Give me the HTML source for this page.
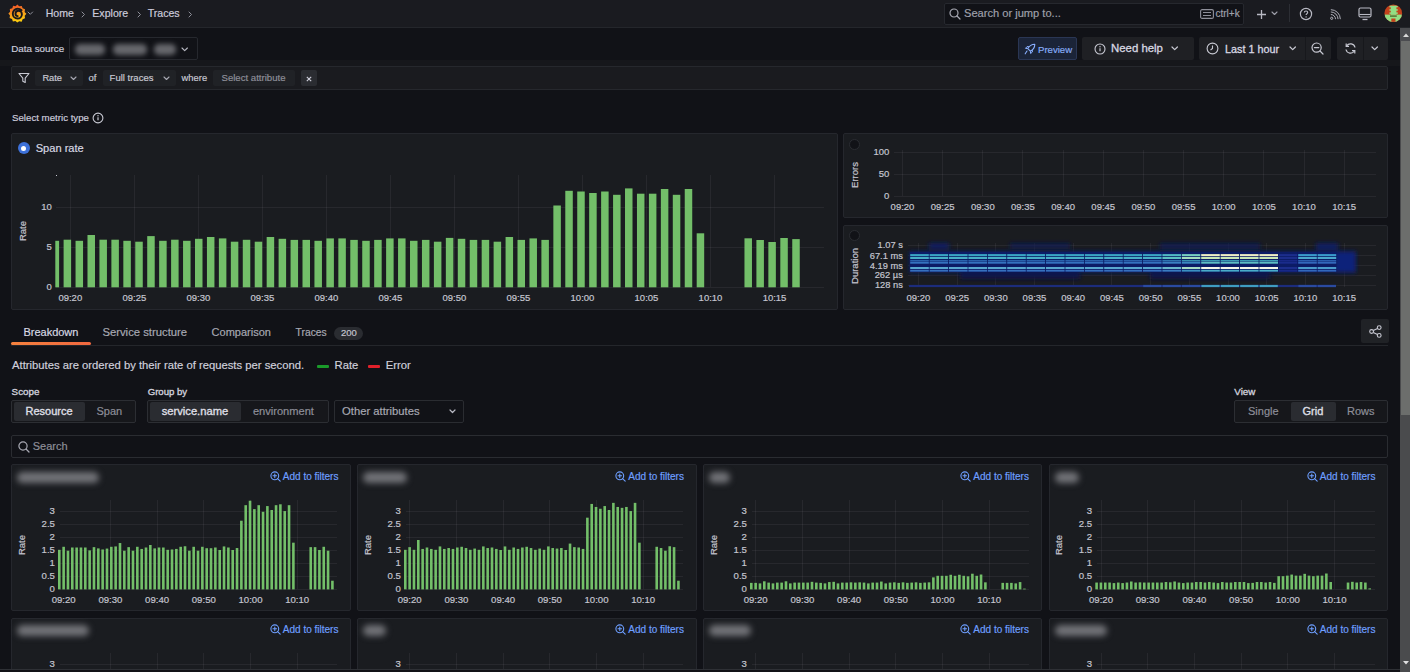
<!DOCTYPE html><html><head><meta charset="utf-8"><style>
html,body{margin:0;padding:0;}
body{width:1410px;height:672px;overflow:hidden;background:#111217;position:relative;font-family:"Liberation Sans", sans-serif;}
.a{position:absolute;}
.t{position:absolute;white-space:nowrap;-webkit-text-stroke-width:0.18px;}
svg{overflow:visible;}
</style></head><body>
<div class="a" style="left:0px;top:0px;width:1410px;height:27px;background:#1a1b20;"></div>
<div class="a" style="left:0px;top:27px;width:1410px;height:1px;background:#24262b;"></div>
<svg class="a" style="left:7.5px;top:4px" width="19" height="19" viewBox="0 0 19 19">
<defs><linearGradient id="lg" x1="0.3" y1="0" x2="0.5" y2="1"><stop offset="0" stop-color="#f2502a"/><stop offset="0.55" stop-color="#f7a21b"/><stop offset="1" stop-color="#fcd20c"/></linearGradient></defs>
<path d="M9.3 0.6 L11.2 2.3 L13.8 1.9 L14.6 4.3 L17 5.3 L16.6 7.9 L18.4 9.8 L16.7 11.7 L17 14.3 L14.6 15.2 L13.7 17.7 L11.2 17.2 L9.3 18.6 L7.4 17 L4.9 17.5 L4 15 L1.6 14.1 L2 11.6 L0.4 9.6 L2.1 7.7 L1.8 5.1 L4.3 4.2 L5.1 1.8 L7.6 2.3 Z" fill="url(#lg)"/>
<path d="M13.6 6.2 C12.6 5.3 11.2 4.8 9.6 4.8 C6.9 4.8 4.8 7 4.8 9.7 C4.8 12.4 6.9 14.5 9.6 14.5 C12 14.5 13.9 12.6 13.9 10.2 C13.9 8.2 12.3 6.8 10.5 6.8 C8.8 6.8 7.5 8.1 7.5 9.8 C7.5 11.1 8.5 12.1 9.7 12.1" fill="none" stroke="#17181c" stroke-width="1.9" stroke-linecap="round"/>
</svg>
<svg class="a" style="left:27.20px;top:11.25px" width="6.6" height="4.3"><path d="M1 1 L3.3 3.3 L5.6 1" fill="none" stroke="#8e8f99" stroke-width="1.0" stroke-linecap="round" stroke-linejoin="round"/></svg>
<div class="t" style="left:45.70px;top:8.03px;font-size:10.6px;line-height:10.6px;color:#ccccdc;font-weight:normal;">Home</div>
<svg class="a" style="left:81.05px;top:10.80px" width="4.5" height="7"><path d="M1 1 L3.5 3.5 L1 6" fill="none" stroke="#8e8f99" stroke-width="1.0" stroke-linecap="round" stroke-linejoin="round"/></svg>
<div class="t" style="left:92.30px;top:8.03px;font-size:10.6px;line-height:10.6px;color:#ccccdc;font-weight:normal;">Explore</div>
<svg class="a" style="left:137.05px;top:10.80px" width="4.5" height="7"><path d="M1 1 L3.5 3.5 L1 6" fill="none" stroke="#8e8f99" stroke-width="1.0" stroke-linecap="round" stroke-linejoin="round"/></svg>
<div class="t" style="left:147.70px;top:8.03px;font-size:10.6px;line-height:10.6px;color:#ccccdc;font-weight:normal;">Traces</div>
<svg class="a" style="left:188.05px;top:10.80px" width="4.5" height="7"><path d="M1 1 L3.5 3.5 L1 6" fill="none" stroke="#8e8f99" stroke-width="1.0" stroke-linecap="round" stroke-linejoin="round"/></svg>
<div class="a" style="left:944px;top:3px;width:300px;height:22px;background:#111217;border:1px solid #26282e;box-sizing:border-box;border-radius:2px;"></div>
<svg class="a" style="left:949px;top:8px" width="12" height="12" viewBox="0 0 12 12"><circle cx="5" cy="5" r="4" fill="none" stroke="#a8a9b3" stroke-width="1.2"/><path d="M8 8 L11 11" stroke="#a8a9b3" stroke-width="1.2" stroke-linecap="round"/></svg>
<div class="t" style="left:964.00px;top:8.10px;font-size:11.1px;line-height:11.1px;color:#9fa0ab;font-weight:normal;">Search or jump to...</div>
<svg class="a" style="left:1200px;top:9px" width="14" height="10" viewBox="0 0 14 10"><rect x="0.6" y="0.6" width="12.8" height="8.8" rx="1.5" fill="none" stroke="#8e8f99" stroke-width="1.1"/><path d="M3 3.5h8M3 6.5h8" stroke="#8e8f99" stroke-width="1"/></svg>
<div class="t" style="left:1215.50px;top:8.54px;font-size:10px;line-height:10px;color:#9fa0ab;font-weight:normal;">ctrl+k</div>
<svg class="a" style="left:1257px;top:10px" width="9" height="9"><path d="M4.5 0v9M0 4.5h9" stroke="#b8b9c3" stroke-width="1.3"/></svg>
<svg class="a" style="left:1270.50px;top:11.25px" width="7" height="4.5"><path d="M1 1 L3.5 3.5 L6 1" fill="none" stroke="#9fa0ab" stroke-width="1.1" stroke-linecap="round" stroke-linejoin="round"/></svg>
<div class="a" style="left:1289px;top:4px;width:1px;height:18px;background:#2c2e34;"></div>
<svg class="a" style="left:1299px;top:7px" width="14" height="14" viewBox="0 0 14 14"><circle cx="7" cy="7" r="5.6" fill="none" stroke="#b8b9c3" stroke-width="1.2"/><path d="M5.3 5.6c0-1 .8-1.6 1.7-1.6s1.7.6 1.7 1.5c0 1.2-1.6 1.2-1.6 2.4" fill="none" stroke="#b8b9c3" stroke-width="1.1"/><circle cx="7.1" cy="9.9" r=".7" fill="#b8b9c3"/></svg>
<svg class="a" style="left:1330px;top:9px" width="11" height="11" viewBox="0 0 13 13"><circle cx="2" cy="11" r="1.3" fill="none" stroke="#b8b9c3" stroke-width="1.1"/><path d="M1 6.5a5.5 5.5 0 0 1 5.5 5.5M1 3.5a8.5 8.5 0 0 1 8.5 8.5M1 0.8a11.2 11.2 0 0 1 11.2 11.2" fill="none" stroke="#b8b9c3" stroke-width="1.1"/></svg>
<svg class="a" style="left:1358px;top:7px" width="14" height="14" viewBox="0 0 14 14"><rect x="1" y="1" width="12" height="9" rx="1.5" fill="none" stroke="#b8b9c3" stroke-width="1.2"/><path d="M1.5 7.5h11" stroke="#b8b9c3" stroke-width="1.1"/><path d="M4.5 12.5h5" stroke="#b8b9c3" stroke-width="1.3"/></svg>
<svg class="a" style="left:1384.3px;top:4.3px" width="19" height="19" viewBox="0 0 19 19"><defs><clipPath id="av"><circle cx="9.3" cy="9.3" r="8.8"/></clipPath></defs>
<g clip-path="url(#av)"><rect x="0" y="0" width="19" height="19" fill="#c2421c"/>
<rect x="0" y="10.6" width="19" height="10" fill="#92de84"/>
<rect x="6.8" y="1.8" width="5.6" height="9" fill="#92de84"/>
<rect x="5.4" y="1.8" width="8.4" height="1.5" fill="#92de84"/>
<rect x="5.4" y="5.2" width="8.4" height="1.5" fill="#92de84"/><rect x="5.4" y="8.4" width="8.4" height="1.5" fill="#92de84"/>
<rect x="6" y="11.3" width="6.8" height="1.6" fill="#5a7a38"/>
<rect x="7.3" y="14.5" width="4.2" height="5" fill="#c2421c"/>
</g></svg>
<div class="t" style="left:11.30px;top:43.70px;font-size:9.8px;line-height:9.8px;color:#ccccdc;font-weight:normal;">Data source</div>
<div class="a" style="left:69px;top:37px;width:129px;height:23px;background:#111217;border:1px solid #26282e;box-sizing:border-box;border-radius:2px;"></div>
<div class="a" style="left:75.0px;top:43.5px;width:30.0px;height:11px;background:#66676c;border-radius:5px;filter:blur(2.8px);"></div>
<div class="a" style="left:113.0px;top:43.5px;width:33.5px;height:11px;background:#66676c;border-radius:5px;filter:blur(2.8px);"></div>
<div class="a" style="left:154.0px;top:43.5px;width:21.5px;height:11px;background:#66676c;border-radius:5px;filter:blur(2.8px);"></div>
<svg class="a" style="left:181.30px;top:46.95px" width="7.4" height="4.7"><path d="M1 1 L3.7 3.7 L6.4 1" fill="none" stroke="#b8b9c3" stroke-width="1.1" stroke-linecap="round" stroke-linejoin="round"/></svg>
<div class="a" style="left:1018px;top:37px;width:59px;height:23px;background:#1b2438;border:1px solid #2a3654;box-sizing:border-box;border-radius:2px;"></div>
<svg class="a" style="left:1023.5px;top:42.5px" width="12" height="12" viewBox="0 0 12 12"><path d="M10.8 1.2 C7.5 1.2 5.2 3 3.8 5.6 L6.4 8.2 C9 6.8 10.8 4.5 10.8 1.2 Z" fill="none" stroke="#8ab0ff" stroke-width="1.1" stroke-linejoin="round"/><path d="M3.8 5.6 L1.5 5.4 L3 3.6 L5.2 3.8 M6.4 8.2 L6.6 10.5 L8.4 9 L8.2 6.8" fill="none" stroke="#8ab0ff" stroke-width="1"/><path d="M3 8 L1.2 10.8" stroke="#8ab0ff" stroke-width="1.1" stroke-linecap="round"/></svg>
<div class="t" style="left:1038.00px;top:44.67px;font-size:9.6px;line-height:9.6px;color:#86acf6;font-weight:normal;">Preview</div>
<div class="a" style="left:1082px;top:37px;width:112px;height:23px;background:#1f2024;border-radius:2px;"></div>
<svg class="a" style="left:1094px;top:43px" width="12" height="12" viewBox="0 0 12 12"><circle cx="6" cy="6" r="5" fill="none" stroke="#c8c9d3" stroke-width="1.1"/><path d="M6 5.3v3" stroke="#c8c9d3" stroke-width="1.2"/><circle cx="6" cy="3.7" r=".7" fill="#c8c9d3"/></svg>
<div class="t" style="left:1111.00px;top:43.35px;font-size:11.4px;line-height:11.4px;color:#d8d8e2;font-weight:normal;-webkit-text-stroke:0.3px #d8d8e2;">Need help</div>
<svg class="a" style="left:1171.30px;top:46.45px" width="7.4" height="4.7"><path d="M1 1 L3.7 3.7 L6.4 1" fill="none" stroke="#c8c9d3" stroke-width="1.2" stroke-linecap="round" stroke-linejoin="round"/></svg>
<div class="a" style="left:1199px;top:37px;width:132px;height:23px;background:#1f2024;border-radius:2px;"></div>
<div class="a" style="left:1305px;top:37px;width:1px;height:23px;background:#17181c;"></div>
<svg class="a" style="left:1206px;top:42px" width="13" height="13" viewBox="0 0 13 13"><circle cx="6.5" cy="6.5" r="5.4" fill="none" stroke="#c8c9d3" stroke-width="1.1"/><path d="M6.5 3.5v3l-2 1.5" fill="none" stroke="#c8c9d3" stroke-width="1.1"/></svg>
<div class="t" style="left:1225.00px;top:43.86px;font-size:10.8px;line-height:10.8px;color:#d8d8e2;font-weight:normal;-webkit-text-stroke:0.3px #d8d8e2;">Last 1 hour</div>
<svg class="a" style="left:1289.30px;top:46.45px" width="7.4" height="4.7"><path d="M1 1 L3.7 3.7 L6.4 1" fill="none" stroke="#c8c9d3" stroke-width="1.2" stroke-linecap="round" stroke-linejoin="round"/></svg>
<svg class="a" style="left:1311px;top:42px" width="13" height="13" viewBox="0 0 13 13"><circle cx="5.6" cy="5.6" r="4.6" fill="none" stroke="#c8c9d3" stroke-width="1.2"/><path d="M3.4 5.6h4.4M9 9l3 3" stroke="#c8c9d3" stroke-width="1.2" stroke-linecap="round"/></svg>
<div class="a" style="left:1337px;top:37px;width:51px;height:23px;background:#1f2024;border-radius:2px;"></div>
<div class="a" style="left:1363px;top:37px;width:1px;height:23px;background:#17181c;"></div>
<svg class="a" style="left:1344px;top:42px" width="13" height="13" viewBox="0 0 13 13"><path d="M11 5.5A4.6 4.6 0 0 0 2.6 4M2 7.5A4.6 4.6 0 0 0 10.4 9" fill="none" stroke="#c8c9d3" stroke-width="1.2"/><path d="M2.2 1.5v2.8h2.8M10.8 11.5V8.7H8" fill="none" stroke="#c8c9d3" stroke-width="1.2"/></svg>
<svg class="a" style="left:1371.30px;top:46.45px" width="7.4" height="4.7"><path d="M1 1 L3.7 3.7 L6.4 1" fill="none" stroke="#c8c9d3" stroke-width="1.2" stroke-linecap="round" stroke-linejoin="round"/></svg>
<div class="a" style="left:0px;top:60px;width:1399.5px;height:6px;background:#16171b;"></div>
<div class="a" style="left:11px;top:66px;width:1377px;height:24px;background:#1a1b1f;border:1px solid #26282d;box-sizing:border-box;border-radius:2px;"></div>
<svg class="a" style="left:18px;top:72px" width="12" height="12" viewBox="0 0 12 12"><path d="M1 1.5h10L7.2 6.2v4.3L4.8 9.3V6.2Z" fill="none" stroke="#c8c9d3" stroke-width="1.1" stroke-linejoin="round"/></svg>
<div class="a" style="left:35px;top:70px;width:48px;height:16px;background:#202226;border-radius:2px;"></div>
<div class="t" style="left:42.40px;top:73.93px;font-size:9.3px;line-height:9.3px;color:#c8c9d3;font-weight:normal;">Rate</div>
<svg class="a" style="left:69.50px;top:76.25px" width="7" height="4.5"><path d="M1 1 L3.5 3.5 L6 1" fill="none" stroke="#a8a9b3" stroke-width="1.1" stroke-linecap="round" stroke-linejoin="round"/></svg>
<div class="t" style="left:88.50px;top:73.26px;font-size:9.5px;line-height:9.5px;color:#c8c9d3;font-weight:normal;">of</div>
<div class="a" style="left:103px;top:70px;width:73px;height:16px;background:#202226;border-radius:2px;"></div>
<div class="t" style="left:109.60px;top:73.26px;font-size:9.5px;line-height:9.5px;color:#c8c9d3;font-weight:normal;">Full traces</div>
<svg class="a" style="left:162.50px;top:76.25px" width="7" height="4.5"><path d="M1 1 L3.5 3.5 L6 1" fill="none" stroke="#a8a9b3" stroke-width="1.1" stroke-linecap="round" stroke-linejoin="round"/></svg>
<div class="t" style="left:181.60px;top:73.34px;font-size:9.4px;line-height:9.4px;color:#c8c9d3;font-weight:normal;">where</div>
<div class="a" style="left:213px;top:70px;width:82px;height:16px;background:#202226;border-radius:2px;"></div>
<div class="t" style="left:221.50px;top:73.17px;font-size:9.6px;line-height:9.6px;color:#8e8f99;font-weight:normal;">Select attribute</div>
<div class="a" style="left:300.5px;top:70px;width:16px;height:16px;background:#2a2c31;border-radius:2px;"></div>
<svg class="a" style="left:305.5px;top:75.5px" width="6" height="6"><path d="M0.8 0.8l4.4 4.4M5.2 0.8l-4.4 4.4" stroke="#d0d0dc" stroke-width="1.1"/></svg>
<div class="t" style="left:12.00px;top:112.59px;font-size:9.7px;line-height:9.7px;color:#ccccdc;font-weight:normal;">Select metric type</div>
<svg class="a" style="left:92px;top:112px" width="12" height="12" viewBox="0 0 12 12"><circle cx="6" cy="6" r="4.9" fill="none" stroke="#c8c9d3" stroke-width="1.1"/><path d="M6 5.3v3" stroke="#c8c9d3" stroke-width="1.2"/><circle cx="6" cy="3.7" r=".7" fill="#c8c9d3"/></svg>
<div class="a" style="left:11px;top:133px;width:826.5px;height:176.8px;background:#1a1c20;border:1px solid #25272d;box-sizing:border-box;border-radius:2px;"></div>
<div class="a" style="left:55.7px;top:174.5px;width:1px;height:1px;background:#c8c9d3"></div>
<div class="a" style="left:17.8px;top:142px;width:12px;height:12px;border-radius:50%;background:#3d71d9;"></div>
<div class="a" style="left:21.3px;top:145.5px;width:5px;height:5px;border-radius:50%;background:#fff;"></div>
<div class="t" style="left:35.70px;top:142.60px;font-size:11.1px;line-height:11.1px;color:#d8d9e3;font-weight:normal;">Span rate</div>
<div class="a" style="left:56.40px;top:206.80px;width:767.60px;height:1px;background:rgba(204,204,220,0.075)"></div>
<div class="t" style="right:1358.30px;top:202.06px;font-size:9.5px;line-height:9.5px;color:#c4c5cf;font-weight:normal;-webkit-text-stroke:0.2px #c4c5cf;">10</div>
<div class="a" style="left:56.40px;top:246.80px;width:767.60px;height:1px;background:rgba(204,204,220,0.075)"></div>
<div class="t" style="right:1358.30px;top:242.06px;font-size:9.5px;line-height:9.5px;color:#c4c5cf;font-weight:normal;-webkit-text-stroke:0.2px #c4c5cf;">5</div>
<div class="a" style="left:56.40px;top:286.80px;width:767.60px;height:1px;background:rgba(204,204,220,0.075)"></div>
<div class="t" style="right:1358.30px;top:282.06px;font-size:9.5px;line-height:9.5px;color:#c4c5cf;font-weight:normal;-webkit-text-stroke:0.2px #c4c5cf;">0</div>
<div class="a" style="left:69.80px;top:175.00px;width:1px;height:112.30px;background:rgba(204,204,220,0.075)"></div>
<div class="t" style="left:70.30px;transform:translateX(-50%);top:292.76px;font-size:9.5px;line-height:9.5px;color:#c4c5cf;font-weight:normal;-webkit-text-stroke:0.2px #c4c5cf;">09:20</div>
<div class="a" style="left:133.82px;top:175.00px;width:1px;height:112.30px;background:rgba(204,204,220,0.075)"></div>
<div class="t" style="left:134.32px;transform:translateX(-50%);top:292.76px;font-size:9.5px;line-height:9.5px;color:#c4c5cf;font-weight:normal;-webkit-text-stroke:0.2px #c4c5cf;">09:25</div>
<div class="a" style="left:197.84px;top:175.00px;width:1px;height:112.30px;background:rgba(204,204,220,0.075)"></div>
<div class="t" style="left:198.34px;transform:translateX(-50%);top:292.76px;font-size:9.5px;line-height:9.5px;color:#c4c5cf;font-weight:normal;-webkit-text-stroke:0.2px #c4c5cf;">09:30</div>
<div class="a" style="left:261.86px;top:175.00px;width:1px;height:112.30px;background:rgba(204,204,220,0.075)"></div>
<div class="t" style="left:262.36px;transform:translateX(-50%);top:292.76px;font-size:9.5px;line-height:9.5px;color:#c4c5cf;font-weight:normal;-webkit-text-stroke:0.2px #c4c5cf;">09:35</div>
<div class="a" style="left:325.88px;top:175.00px;width:1px;height:112.30px;background:rgba(204,204,220,0.075)"></div>
<div class="t" style="left:326.38px;transform:translateX(-50%);top:292.76px;font-size:9.5px;line-height:9.5px;color:#c4c5cf;font-weight:normal;-webkit-text-stroke:0.2px #c4c5cf;">09:40</div>
<div class="a" style="left:389.90px;top:175.00px;width:1px;height:112.30px;background:rgba(204,204,220,0.075)"></div>
<div class="t" style="left:390.40px;transform:translateX(-50%);top:292.76px;font-size:9.5px;line-height:9.5px;color:#c4c5cf;font-weight:normal;-webkit-text-stroke:0.2px #c4c5cf;">09:45</div>
<div class="a" style="left:453.92px;top:175.00px;width:1px;height:112.30px;background:rgba(204,204,220,0.075)"></div>
<div class="t" style="left:454.42px;transform:translateX(-50%);top:292.76px;font-size:9.5px;line-height:9.5px;color:#c4c5cf;font-weight:normal;-webkit-text-stroke:0.2px #c4c5cf;">09:50</div>
<div class="a" style="left:517.94px;top:175.00px;width:1px;height:112.30px;background:rgba(204,204,220,0.075)"></div>
<div class="t" style="left:518.44px;transform:translateX(-50%);top:292.76px;font-size:9.5px;line-height:9.5px;color:#c4c5cf;font-weight:normal;-webkit-text-stroke:0.2px #c4c5cf;">09:55</div>
<div class="a" style="left:581.96px;top:175.00px;width:1px;height:112.30px;background:rgba(204,204,220,0.075)"></div>
<div class="t" style="left:582.46px;transform:translateX(-50%);top:292.76px;font-size:9.5px;line-height:9.5px;color:#c4c5cf;font-weight:normal;-webkit-text-stroke:0.2px #c4c5cf;">10:00</div>
<div class="a" style="left:645.98px;top:175.00px;width:1px;height:112.30px;background:rgba(204,204,220,0.075)"></div>
<div class="t" style="left:646.48px;transform:translateX(-50%);top:292.76px;font-size:9.5px;line-height:9.5px;color:#c4c5cf;font-weight:normal;-webkit-text-stroke:0.2px #c4c5cf;">10:05</div>
<div class="a" style="left:710.00px;top:175.00px;width:1px;height:112.30px;background:rgba(204,204,220,0.075)"></div>
<div class="t" style="left:710.50px;transform:translateX(-50%);top:292.76px;font-size:9.5px;line-height:9.5px;color:#c4c5cf;font-weight:normal;-webkit-text-stroke:0.2px #c4c5cf;">10:10</div>
<div class="a" style="left:774.02px;top:175.00px;width:1px;height:112.30px;background:rgba(204,204,220,0.075)"></div>
<div class="t" style="left:774.52px;transform:translateX(-50%);top:292.76px;font-size:9.5px;line-height:9.5px;color:#c4c5cf;font-weight:normal;-webkit-text-stroke:0.2px #c4c5cf;">10:15</div>
<div class="t" style="left:23.00px;top:231.00px;font-size:9.5px;line-height:9.5px;color:#c4c5cf;transform:translate(-50%,-50%) rotate(-90deg);-webkit-text-stroke:0.2px #c4c5cf;">Rate</div>
<svg class="a" style="left:0;top:0" width="1410" height="672"><rect x="55.30" y="240.80" width="3.8" height="46.50" fill="#73bf69"/><rect x="63.60" y="239.70" width="7.5" height="47.60" fill="#73bf69"/><rect x="75.55" y="240.80" width="7.5" height="46.50" fill="#73bf69"/><rect x="87.49" y="235.00" width="7.5" height="52.30" fill="#73bf69"/><rect x="99.44" y="239.70" width="7.5" height="47.60" fill="#73bf69"/><rect x="111.38" y="239.70" width="7.5" height="47.60" fill="#73bf69"/><rect x="123.33" y="240.80" width="7.5" height="46.50" fill="#73bf69"/><rect x="135.27" y="241.70" width="7.5" height="45.60" fill="#73bf69"/><rect x="147.22" y="236.10" width="7.5" height="51.20" fill="#73bf69"/><rect x="159.16" y="240.80" width="7.5" height="46.50" fill="#73bf69"/><rect x="171.10" y="239.70" width="7.5" height="47.60" fill="#73bf69"/><rect x="183.05" y="240.80" width="7.5" height="46.50" fill="#73bf69"/><rect x="195.00" y="238.80" width="7.5" height="48.50" fill="#73bf69"/><rect x="206.94" y="237.00" width="7.5" height="50.30" fill="#73bf69"/><rect x="218.88" y="238.40" width="7.5" height="48.90" fill="#73bf69"/><rect x="230.83" y="241.70" width="7.5" height="45.60" fill="#73bf69"/><rect x="242.78" y="239.80" width="7.5" height="47.50" fill="#73bf69"/><rect x="254.72" y="241.70" width="7.5" height="45.60" fill="#73bf69"/><rect x="266.67" y="237.00" width="7.5" height="50.30" fill="#73bf69"/><rect x="278.61" y="238.80" width="7.5" height="48.50" fill="#73bf69"/><rect x="290.56" y="239.90" width="7.5" height="47.40" fill="#73bf69"/><rect x="302.50" y="239.90" width="7.5" height="47.40" fill="#73bf69"/><rect x="314.44" y="240.80" width="7.5" height="46.50" fill="#73bf69"/><rect x="326.39" y="238.40" width="7.5" height="48.90" fill="#73bf69"/><rect x="338.34" y="238.40" width="7.5" height="48.90" fill="#73bf69"/><rect x="350.28" y="239.90" width="7.5" height="47.40" fill="#73bf69"/><rect x="362.23" y="240.80" width="7.5" height="46.50" fill="#73bf69"/><rect x="374.17" y="239.90" width="7.5" height="47.40" fill="#73bf69"/><rect x="386.12" y="238.40" width="7.5" height="48.90" fill="#73bf69"/><rect x="398.06" y="238.40" width="7.5" height="48.90" fill="#73bf69"/><rect x="410.01" y="240.80" width="7.5" height="46.50" fill="#73bf69"/><rect x="421.95" y="239.90" width="7.5" height="47.40" fill="#73bf69"/><rect x="433.90" y="241.70" width="7.5" height="45.60" fill="#73bf69"/><rect x="445.84" y="237.90" width="7.5" height="49.40" fill="#73bf69"/><rect x="457.79" y="238.80" width="7.5" height="48.50" fill="#73bf69"/><rect x="469.73" y="239.90" width="7.5" height="47.40" fill="#73bf69"/><rect x="481.68" y="239.90" width="7.5" height="47.40" fill="#73bf69"/><rect x="493.62" y="241.70" width="7.5" height="45.60" fill="#73bf69"/><rect x="505.57" y="237.00" width="7.5" height="50.30" fill="#73bf69"/><rect x="517.51" y="239.90" width="7.5" height="47.40" fill="#73bf69"/><rect x="529.46" y="238.40" width="7.5" height="48.90" fill="#73bf69"/><rect x="541.40" y="239.90" width="7.5" height="47.40" fill="#73bf69"/><rect x="553.35" y="205.50" width="7.5" height="81.80" fill="#73bf69"/><rect x="565.29" y="190.80" width="7.5" height="96.50" fill="#73bf69"/><rect x="577.24" y="191.50" width="7.5" height="95.80" fill="#73bf69"/><rect x="589.18" y="193.00" width="7.5" height="94.30" fill="#73bf69"/><rect x="601.12" y="191.50" width="7.5" height="95.80" fill="#73bf69"/><rect x="613.07" y="194.80" width="7.5" height="92.50" fill="#73bf69"/><rect x="625.01" y="188.40" width="7.5" height="98.90" fill="#73bf69"/><rect x="636.96" y="193.70" width="7.5" height="93.60" fill="#73bf69"/><rect x="648.91" y="193.70" width="7.5" height="93.60" fill="#73bf69"/><rect x="660.85" y="189.00" width="7.5" height="98.30" fill="#73bf69"/><rect x="672.80" y="194.80" width="7.5" height="92.50" fill="#73bf69"/><rect x="684.74" y="189.00" width="7.5" height="98.30" fill="#73bf69"/><rect x="696.69" y="233.30" width="7.5" height="54.00" fill="#73bf69"/><rect x="744.47" y="238.30" width="7.5" height="49.00" fill="#73bf69"/><rect x="756.41" y="240.00" width="7.5" height="47.30" fill="#73bf69"/><rect x="768.36" y="242.00" width="7.5" height="45.30" fill="#73bf69"/><rect x="780.30" y="238.00" width="7.5" height="49.30" fill="#73bf69"/><rect x="792.25" y="239.10" width="7.5" height="48.20" fill="#73bf69"/></svg>
<div class="a" style="left:843px;top:133px;width:545px;height:85px;background:#1a1c20;border:1px solid #25272d;box-sizing:border-box;border-radius:2px;"></div>
<div class="a" style="left:849.4px;top:138.9px;width:11px;height:11px;border-radius:50%;background:#111217;border:1px solid #2a2c32;box-sizing:border-box"></div>
<div class="t" style="left:855.30px;top:174.60px;font-size:9.5px;line-height:9.5px;color:#c4c5cf;transform:translate(-50%,-50%) rotate(-90deg);-webkit-text-stroke:0.2px #c4c5cf;">Errors</div>
<div class="a" style="left:894.00px;top:152.10px;width:482.00px;height:1px;background:rgba(204,204,220,0.075)"></div>
<div class="t" style="right:520.60px;top:147.36px;font-size:9.5px;line-height:9.5px;color:#c4c5cf;font-weight:normal;-webkit-text-stroke:0.2px #c4c5cf;">100</div>
<div class="a" style="left:894.00px;top:173.90px;width:482.00px;height:1px;background:rgba(204,204,220,0.075)"></div>
<div class="t" style="right:520.60px;top:169.16px;font-size:9.5px;line-height:9.5px;color:#c4c5cf;font-weight:normal;-webkit-text-stroke:0.2px #c4c5cf;">50</div>
<div class="a" style="left:894.00px;top:195.50px;width:482.00px;height:1px;background:rgba(204,204,220,0.075)"></div>
<div class="t" style="right:520.60px;top:190.76px;font-size:9.5px;line-height:9.5px;color:#c4c5cf;font-weight:normal;-webkit-text-stroke:0.2px #c4c5cf;">0</div>
<div class="a" style="left:902.00px;top:150.00px;width:1px;height:46.00px;background:rgba(204,204,220,0.075)"></div>
<div class="t" style="left:902.50px;transform:translateX(-50%);top:201.56px;font-size:9.5px;line-height:9.5px;color:#c4c5cf;font-weight:normal;-webkit-text-stroke:0.2px #c4c5cf;">09:20</div>
<div class="a" style="left:942.15px;top:150.00px;width:1px;height:46.00px;background:rgba(204,204,220,0.075)"></div>
<div class="t" style="left:942.65px;transform:translateX(-50%);top:201.56px;font-size:9.5px;line-height:9.5px;color:#c4c5cf;font-weight:normal;-webkit-text-stroke:0.2px #c4c5cf;">09:25</div>
<div class="a" style="left:982.30px;top:150.00px;width:1px;height:46.00px;background:rgba(204,204,220,0.075)"></div>
<div class="t" style="left:982.80px;transform:translateX(-50%);top:201.56px;font-size:9.5px;line-height:9.5px;color:#c4c5cf;font-weight:normal;-webkit-text-stroke:0.2px #c4c5cf;">09:30</div>
<div class="a" style="left:1022.45px;top:150.00px;width:1px;height:46.00px;background:rgba(204,204,220,0.075)"></div>
<div class="t" style="left:1022.95px;transform:translateX(-50%);top:201.56px;font-size:9.5px;line-height:9.5px;color:#c4c5cf;font-weight:normal;-webkit-text-stroke:0.2px #c4c5cf;">09:35</div>
<div class="a" style="left:1062.60px;top:150.00px;width:1px;height:46.00px;background:rgba(204,204,220,0.075)"></div>
<div class="t" style="left:1063.10px;transform:translateX(-50%);top:201.56px;font-size:9.5px;line-height:9.5px;color:#c4c5cf;font-weight:normal;-webkit-text-stroke:0.2px #c4c5cf;">09:40</div>
<div class="a" style="left:1102.75px;top:150.00px;width:1px;height:46.00px;background:rgba(204,204,220,0.075)"></div>
<div class="t" style="left:1103.25px;transform:translateX(-50%);top:201.56px;font-size:9.5px;line-height:9.5px;color:#c4c5cf;font-weight:normal;-webkit-text-stroke:0.2px #c4c5cf;">09:45</div>
<div class="a" style="left:1142.90px;top:150.00px;width:1px;height:46.00px;background:rgba(204,204,220,0.075)"></div>
<div class="t" style="left:1143.40px;transform:translateX(-50%);top:201.56px;font-size:9.5px;line-height:9.5px;color:#c4c5cf;font-weight:normal;-webkit-text-stroke:0.2px #c4c5cf;">09:50</div>
<div class="a" style="left:1183.05px;top:150.00px;width:1px;height:46.00px;background:rgba(204,204,220,0.075)"></div>
<div class="t" style="left:1183.55px;transform:translateX(-50%);top:201.56px;font-size:9.5px;line-height:9.5px;color:#c4c5cf;font-weight:normal;-webkit-text-stroke:0.2px #c4c5cf;">09:55</div>
<div class="a" style="left:1223.20px;top:150.00px;width:1px;height:46.00px;background:rgba(204,204,220,0.075)"></div>
<div class="t" style="left:1223.70px;transform:translateX(-50%);top:201.56px;font-size:9.5px;line-height:9.5px;color:#c4c5cf;font-weight:normal;-webkit-text-stroke:0.2px #c4c5cf;">10:00</div>
<div class="a" style="left:1263.35px;top:150.00px;width:1px;height:46.00px;background:rgba(204,204,220,0.075)"></div>
<div class="t" style="left:1263.85px;transform:translateX(-50%);top:201.56px;font-size:9.5px;line-height:9.5px;color:#c4c5cf;font-weight:normal;-webkit-text-stroke:0.2px #c4c5cf;">10:05</div>
<div class="a" style="left:1303.50px;top:150.00px;width:1px;height:46.00px;background:rgba(204,204,220,0.075)"></div>
<div class="t" style="left:1304.00px;transform:translateX(-50%);top:201.56px;font-size:9.5px;line-height:9.5px;color:#c4c5cf;font-weight:normal;-webkit-text-stroke:0.2px #c4c5cf;">10:10</div>
<div class="a" style="left:1343.65px;top:150.00px;width:1px;height:46.00px;background:rgba(204,204,220,0.075)"></div>
<div class="t" style="left:1344.15px;transform:translateX(-50%);top:201.56px;font-size:9.5px;line-height:9.5px;color:#c4c5cf;font-weight:normal;-webkit-text-stroke:0.2px #c4c5cf;">10:15</div>
<div class="a" style="left:843px;top:224.8px;width:545px;height:85px;background:#1a1c20;border:1px solid #25272d;box-sizing:border-box;border-radius:2px;"></div>
<div class="a" style="left:849.4px;top:230.1px;width:11px;height:11px;border-radius:50%;background:#111217;border:1px solid #2a2c32;box-sizing:border-box"></div>
<div class="t" style="left:855.30px;top:266.00px;font-size:9.5px;line-height:9.5px;color:#c4c5cf;transform:translate(-50%,-50%) rotate(-90deg);-webkit-text-stroke:0.2px #c4c5cf;">Duration</div>
<div class="a" style="left:908.00px;top:244.50px;width:468.00px;height:1px;background:rgba(204,204,220,0.075)"></div>
<div class="t" style="right:507.20px;top:240.96px;font-size:9.3px;line-height:9.3px;color:#c4c5cf;font-weight:normal;-webkit-text-stroke:0.2px #c4c5cf;">1.07 s</div>
<div class="a" style="left:908.00px;top:255.20px;width:468.00px;height:1px;background:rgba(204,204,220,0.075)"></div>
<div class="t" style="right:507.20px;top:251.66px;font-size:9.3px;line-height:9.3px;color:#c4c5cf;font-weight:normal;-webkit-text-stroke:0.2px #c4c5cf;">67.1 ms</div>
<div class="a" style="left:908.00px;top:265.30px;width:468.00px;height:1px;background:rgba(204,204,220,0.075)"></div>
<div class="t" style="right:507.20px;top:261.76px;font-size:9.3px;line-height:9.3px;color:#c4c5cf;font-weight:normal;-webkit-text-stroke:0.2px #c4c5cf;">4.19 ms</div>
<div class="a" style="left:908.00px;top:275.00px;width:468.00px;height:1px;background:rgba(204,204,220,0.075)"></div>
<div class="t" style="right:507.20px;top:271.46px;font-size:9.3px;line-height:9.3px;color:#c4c5cf;font-weight:normal;-webkit-text-stroke:0.2px #c4c5cf;">262 µs</div>
<div class="a" style="left:908.00px;top:285.00px;width:468.00px;height:1px;background:rgba(204,204,220,0.075)"></div>
<div class="t" style="right:507.20px;top:281.46px;font-size:9.3px;line-height:9.3px;color:#c4c5cf;font-weight:normal;-webkit-text-stroke:0.2px #c4c5cf;">128 ns</div>
<div class="a" style="left:917.90px;top:243.00px;width:1px;height:44.00px;background:rgba(204,204,220,0.075)"></div>
<div class="t" style="left:918.40px;transform:translateX(-50%);top:292.76px;font-size:9.5px;line-height:9.5px;color:#c4c5cf;font-weight:normal;-webkit-text-stroke:0.2px #c4c5cf;">09:20</div>
<div class="a" style="left:956.60px;top:243.00px;width:1px;height:44.00px;background:rgba(204,204,220,0.075)"></div>
<div class="t" style="left:957.10px;transform:translateX(-50%);top:292.76px;font-size:9.5px;line-height:9.5px;color:#c4c5cf;font-weight:normal;-webkit-text-stroke:0.2px #c4c5cf;">09:25</div>
<div class="a" style="left:995.30px;top:243.00px;width:1px;height:44.00px;background:rgba(204,204,220,0.075)"></div>
<div class="t" style="left:995.80px;transform:translateX(-50%);top:292.76px;font-size:9.5px;line-height:9.5px;color:#c4c5cf;font-weight:normal;-webkit-text-stroke:0.2px #c4c5cf;">09:30</div>
<div class="a" style="left:1034.00px;top:243.00px;width:1px;height:44.00px;background:rgba(204,204,220,0.075)"></div>
<div class="t" style="left:1034.50px;transform:translateX(-50%);top:292.76px;font-size:9.5px;line-height:9.5px;color:#c4c5cf;font-weight:normal;-webkit-text-stroke:0.2px #c4c5cf;">09:35</div>
<div class="a" style="left:1072.70px;top:243.00px;width:1px;height:44.00px;background:rgba(204,204,220,0.075)"></div>
<div class="t" style="left:1073.20px;transform:translateX(-50%);top:292.76px;font-size:9.5px;line-height:9.5px;color:#c4c5cf;font-weight:normal;-webkit-text-stroke:0.2px #c4c5cf;">09:40</div>
<div class="a" style="left:1111.40px;top:243.00px;width:1px;height:44.00px;background:rgba(204,204,220,0.075)"></div>
<div class="t" style="left:1111.90px;transform:translateX(-50%);top:292.76px;font-size:9.5px;line-height:9.5px;color:#c4c5cf;font-weight:normal;-webkit-text-stroke:0.2px #c4c5cf;">09:45</div>
<div class="a" style="left:1150.10px;top:243.00px;width:1px;height:44.00px;background:rgba(204,204,220,0.075)"></div>
<div class="t" style="left:1150.60px;transform:translateX(-50%);top:292.76px;font-size:9.5px;line-height:9.5px;color:#c4c5cf;font-weight:normal;-webkit-text-stroke:0.2px #c4c5cf;">09:50</div>
<div class="a" style="left:1188.80px;top:243.00px;width:1px;height:44.00px;background:rgba(204,204,220,0.075)"></div>
<div class="t" style="left:1189.30px;transform:translateX(-50%);top:292.76px;font-size:9.5px;line-height:9.5px;color:#c4c5cf;font-weight:normal;-webkit-text-stroke:0.2px #c4c5cf;">09:55</div>
<div class="a" style="left:1227.50px;top:243.00px;width:1px;height:44.00px;background:rgba(204,204,220,0.075)"></div>
<div class="t" style="left:1228.00px;transform:translateX(-50%);top:292.76px;font-size:9.5px;line-height:9.5px;color:#c4c5cf;font-weight:normal;-webkit-text-stroke:0.2px #c4c5cf;">10:00</div>
<div class="a" style="left:1266.20px;top:243.00px;width:1px;height:44.00px;background:rgba(204,204,220,0.075)"></div>
<div class="t" style="left:1266.70px;transform:translateX(-50%);top:292.76px;font-size:9.5px;line-height:9.5px;color:#c4c5cf;font-weight:normal;-webkit-text-stroke:0.2px #c4c5cf;">10:05</div>
<div class="a" style="left:1304.90px;top:243.00px;width:1px;height:44.00px;background:rgba(204,204,220,0.075)"></div>
<div class="t" style="left:1305.40px;transform:translateX(-50%);top:292.76px;font-size:9.5px;line-height:9.5px;color:#c4c5cf;font-weight:normal;-webkit-text-stroke:0.2px #c4c5cf;">10:10</div>
<div class="a" style="left:1343.60px;top:243.00px;width:1px;height:44.00px;background:rgba(204,204,220,0.075)"></div>
<div class="t" style="left:1344.10px;transform:translateX(-50%);top:292.76px;font-size:9.5px;line-height:9.5px;color:#c4c5cf;font-weight:normal;-webkit-text-stroke:0.2px #c4c5cf;">10:15</div>
<svg class="a" style="left:0;top:0" width="1410" height="672"><defs><filter id="bl" x="-20%" y="-50%" width="140%" height="200%"><feGaussianBlur stdDeviation="2.2"/></filter></defs><g filter="url(#bl)"><rect x="909" y="251" width="447" height="22" fill="#0b1a58"/><rect x="929" y="243" width="20" height="6" fill="#0c1c62"/><rect x="1010" y="243.5" width="60" height="4.5" fill="#0c1a55"/><rect x="1160" y="243.5" width="100" height="5" fill="#0c1a55"/><rect x="1316" y="243" width="22" height="7" fill="#0c1c62"/><rect x="960" y="272" width="120" height="7" fill="#0a1648"/><rect x="1150" y="272" width="120" height="7" fill="#0a1648"/><rect x="1336" y="252" width="20" height="20" fill="#10207a"/></g><rect x="909" y="284.9" width="427" height="2.2" fill="#1c2c7c"/><rect x="909.80" y="251.8" width="19.40" height="20.2" fill="#0c1c66"/><rect x="910.20" y="254.1" width="18.60" height="2.1" fill="#3aa6c4"/><rect x="910.20" y="257" width="18.60" height="2.0" fill="#47b0c6"/><rect x="910.20" y="260" width="18.60" height="1.4" fill="#2a62ad"/><rect x="910.20" y="261.7" width="18.60" height="2.0" fill="#3472bf"/><rect x="910.20" y="267" width="18.60" height="2.0" fill="#58a8cf"/><rect x="910.20" y="269.8" width="18.60" height="1.8" fill="#3670bd"/><rect x="929.20" y="251.8" width="19.40" height="20.2" fill="#0c1c66"/><rect x="929.60" y="254.1" width="18.60" height="2.1" fill="#3aa6c4"/><rect x="929.60" y="257" width="18.60" height="2.0" fill="#47b0c6"/><rect x="929.60" y="260" width="18.60" height="1.4" fill="#2a62ad"/><rect x="929.60" y="261.7" width="18.60" height="2.0" fill="#3472bf"/><rect x="929.60" y="267" width="18.60" height="2.0" fill="#58a8cf"/><rect x="929.60" y="269.8" width="18.60" height="1.8" fill="#3670bd"/><rect x="948.60" y="251.8" width="19.40" height="20.2" fill="#0c1c66"/><rect x="949.00" y="254.1" width="18.60" height="2.1" fill="#3aa6c4"/><rect x="949.00" y="257" width="18.60" height="2.0" fill="#47b0c6"/><rect x="949.00" y="260" width="18.60" height="1.4" fill="#2a62ad"/><rect x="949.00" y="261.7" width="18.60" height="2.0" fill="#3472bf"/><rect x="949.00" y="267" width="18.60" height="2.0" fill="#58a8cf"/><rect x="949.00" y="269.8" width="18.60" height="1.8" fill="#3670bd"/><rect x="968.00" y="251.8" width="19.40" height="20.2" fill="#0c1c66"/><rect x="968.40" y="254.1" width="18.60" height="2.1" fill="#3aa6c4"/><rect x="968.40" y="257" width="18.60" height="2.0" fill="#47b0c6"/><rect x="968.40" y="260" width="18.60" height="1.4" fill="#2a62ad"/><rect x="968.40" y="261.7" width="18.60" height="2.0" fill="#3472bf"/><rect x="968.40" y="267" width="18.60" height="2.0" fill="#58a8cf"/><rect x="968.40" y="269.8" width="18.60" height="1.8" fill="#3670bd"/><rect x="987.40" y="251.8" width="19.40" height="20.2" fill="#0c1c66"/><rect x="987.80" y="254.1" width="18.60" height="2.1" fill="#3aa6c4"/><rect x="987.80" y="257" width="18.60" height="2.0" fill="#47b0c6"/><rect x="987.80" y="260" width="18.60" height="1.4" fill="#2a62ad"/><rect x="987.80" y="261.7" width="18.60" height="2.0" fill="#3472bf"/><rect x="987.80" y="267" width="18.60" height="2.0" fill="#58a8cf"/><rect x="987.80" y="269.8" width="18.60" height="1.8" fill="#3670bd"/><rect x="1006.80" y="251.8" width="19.40" height="20.2" fill="#0c1c66"/><rect x="1007.20" y="254.1" width="18.60" height="2.1" fill="#3aa6c4"/><rect x="1007.20" y="257" width="18.60" height="2.0" fill="#47b0c6"/><rect x="1007.20" y="260" width="18.60" height="1.4" fill="#2a62ad"/><rect x="1007.20" y="261.7" width="18.60" height="2.0" fill="#3472bf"/><rect x="1007.20" y="267" width="18.60" height="2.0" fill="#58a8cf"/><rect x="1007.20" y="269.8" width="18.60" height="1.8" fill="#3670bd"/><rect x="1026.20" y="251.8" width="19.40" height="20.2" fill="#0c1c66"/><rect x="1026.60" y="254.1" width="18.60" height="2.1" fill="#3aa6c4"/><rect x="1026.60" y="257" width="18.60" height="2.0" fill="#47b0c6"/><rect x="1026.60" y="260" width="18.60" height="1.4" fill="#2a62ad"/><rect x="1026.60" y="261.7" width="18.60" height="2.0" fill="#3472bf"/><rect x="1026.60" y="267" width="18.60" height="2.0" fill="#58a8cf"/><rect x="1026.60" y="269.8" width="18.60" height="1.8" fill="#3670bd"/><rect x="1045.60" y="251.8" width="19.40" height="20.2" fill="#0c1c66"/><rect x="1046.00" y="254.1" width="18.60" height="2.1" fill="#3aa6c4"/><rect x="1046.00" y="257" width="18.60" height="2.0" fill="#47b0c6"/><rect x="1046.00" y="260" width="18.60" height="1.4" fill="#2a62ad"/><rect x="1046.00" y="261.7" width="18.60" height="2.0" fill="#3472bf"/><rect x="1046.00" y="267" width="18.60" height="2.0" fill="#58a8cf"/><rect x="1046.00" y="269.8" width="18.60" height="1.8" fill="#3670bd"/><rect x="1065.00" y="251.8" width="19.40" height="20.2" fill="#0c1c66"/><rect x="1065.40" y="254.1" width="18.60" height="2.1" fill="#3aa6c4"/><rect x="1065.40" y="257" width="18.60" height="2.0" fill="#47b0c6"/><rect x="1065.40" y="260" width="18.60" height="1.4" fill="#2a62ad"/><rect x="1065.40" y="261.7" width="18.60" height="2.0" fill="#3472bf"/><rect x="1065.40" y="267" width="18.60" height="2.0" fill="#58a8cf"/><rect x="1065.40" y="269.8" width="18.60" height="1.8" fill="#3670bd"/><rect x="1084.40" y="251.8" width="19.40" height="20.2" fill="#0c1c66"/><rect x="1084.80" y="254.1" width="18.60" height="2.1" fill="#3aa6c4"/><rect x="1084.80" y="257" width="18.60" height="2.0" fill="#47b0c6"/><rect x="1084.80" y="260" width="18.60" height="1.4" fill="#2a62ad"/><rect x="1084.80" y="261.7" width="18.60" height="2.0" fill="#3472bf"/><rect x="1084.80" y="267" width="18.60" height="2.0" fill="#58a8cf"/><rect x="1084.80" y="269.8" width="18.60" height="1.8" fill="#3670bd"/><rect x="1103.80" y="251.8" width="19.40" height="20.2" fill="#0c1c66"/><rect x="1104.20" y="254.1" width="18.60" height="2.1" fill="#3aa6c4"/><rect x="1104.20" y="257" width="18.60" height="2.0" fill="#47b0c6"/><rect x="1104.20" y="260" width="18.60" height="1.4" fill="#2a62ad"/><rect x="1104.20" y="261.7" width="18.60" height="2.0" fill="#3472bf"/><rect x="1104.20" y="267" width="18.60" height="2.0" fill="#58a8cf"/><rect x="1104.20" y="269.8" width="18.60" height="1.8" fill="#3670bd"/><rect x="1123.20" y="251.8" width="19.40" height="20.2" fill="#0c1c66"/><rect x="1123.60" y="254.1" width="18.60" height="2.1" fill="#3aa6c4"/><rect x="1123.60" y="257" width="18.60" height="2.0" fill="#47b0c6"/><rect x="1123.60" y="260" width="18.60" height="1.4" fill="#2a62ad"/><rect x="1123.60" y="261.7" width="18.60" height="2.0" fill="#3472bf"/><rect x="1123.60" y="267" width="18.60" height="2.0" fill="#58a8cf"/><rect x="1123.60" y="269.8" width="18.60" height="1.8" fill="#3670bd"/><rect x="1142.60" y="251.8" width="19.40" height="20.2" fill="#0c1c66"/><rect x="1143.00" y="254.1" width="18.60" height="2.1" fill="#3aa6c4"/><rect x="1143.00" y="257" width="18.60" height="2.0" fill="#47b0c6"/><rect x="1143.00" y="260" width="18.60" height="1.4" fill="#2a62ad"/><rect x="1143.00" y="261.7" width="18.60" height="2.0" fill="#3472bf"/><rect x="1143.00" y="267" width="18.60" height="2.0" fill="#58a8cf"/><rect x="1143.00" y="269.8" width="18.60" height="1.8" fill="#3670bd"/><rect x="1162.00" y="251.8" width="19.40" height="20.2" fill="#0c1c66"/><rect x="1162.40" y="254.1" width="18.60" height="2.1" fill="#52b8c4"/><rect x="1162.40" y="257" width="18.60" height="2.0" fill="#5cc0c0"/><rect x="1162.40" y="260" width="18.60" height="1.4" fill="#2e74b0"/><rect x="1162.40" y="261.7" width="18.60" height="2.0" fill="#3a80c2"/><rect x="1162.40" y="267" width="18.60" height="2.0" fill="#6ab8cc"/><rect x="1162.40" y="269.8" width="18.60" height="1.8" fill="#3a7cc0"/><rect x="1181.40" y="251.8" width="19.40" height="20.2" fill="#0c1c66"/><rect x="1181.80" y="254.1" width="18.60" height="2.1" fill="#78cfc0"/><rect x="1181.80" y="257" width="18.60" height="2.0" fill="#a2dcbc"/><rect x="1181.80" y="260" width="18.60" height="1.4" fill="#3590b0"/><rect x="1181.80" y="261.7" width="18.60" height="2.0" fill="#3a88c0"/><rect x="1181.80" y="267" width="18.60" height="2.0" fill="#a6dcc4"/><rect x="1181.80" y="269.8" width="18.60" height="1.8" fill="#3a90c0"/><rect x="1200.80" y="251.8" width="19.40" height="20.2" fill="#0c1c66"/><rect x="1201.20" y="254.1" width="18.60" height="2.1" fill="#eeeec4"/><rect x="1201.20" y="257" width="18.60" height="2.0" fill="#c8e6b4"/><rect x="1201.20" y="260" width="18.60" height="1.4" fill="#3a9ab4"/><rect x="1201.20" y="261.7" width="18.60" height="2.0" fill="#5cbcc4"/><rect x="1201.20" y="267" width="18.60" height="2.0" fill="#f4f6e8"/><rect x="1201.20" y="269.8" width="18.60" height="1.8" fill="#48acc8"/><rect x="1220.20" y="251.8" width="19.40" height="20.2" fill="#0c1c66"/><rect x="1220.60" y="254.1" width="18.60" height="2.1" fill="#eeeec4"/><rect x="1220.60" y="257" width="18.60" height="2.0" fill="#c8e6b4"/><rect x="1220.60" y="260" width="18.60" height="1.4" fill="#3a9ab4"/><rect x="1220.60" y="261.7" width="18.60" height="2.0" fill="#5cbcc4"/><rect x="1220.60" y="267" width="18.60" height="2.0" fill="#f4f6e8"/><rect x="1220.60" y="269.8" width="18.60" height="1.8" fill="#48acc8"/><rect x="1239.60" y="251.8" width="19.40" height="20.2" fill="#0c1c66"/><rect x="1240.00" y="254.1" width="18.60" height="2.1" fill="#eeeec4"/><rect x="1240.00" y="257" width="18.60" height="2.0" fill="#c8e6b4"/><rect x="1240.00" y="260" width="18.60" height="1.4" fill="#3a9ab4"/><rect x="1240.00" y="261.7" width="18.60" height="2.0" fill="#5cbcc4"/><rect x="1240.00" y="267" width="18.60" height="2.0" fill="#f4f6e8"/><rect x="1240.00" y="269.8" width="18.60" height="1.8" fill="#48acc8"/><rect x="1259.00" y="251.8" width="19.40" height="20.2" fill="#0c1c66"/><rect x="1259.40" y="254.1" width="18.60" height="2.1" fill="#eeeec4"/><rect x="1259.40" y="257" width="18.60" height="2.0" fill="#c8e6b4"/><rect x="1259.40" y="260" width="18.60" height="1.4" fill="#3a9ab4"/><rect x="1259.40" y="261.7" width="18.60" height="2.0" fill="#5cbcc4"/><rect x="1259.40" y="267" width="18.60" height="2.0" fill="#f4f6e8"/><rect x="1259.40" y="269.8" width="18.60" height="1.8" fill="#48acc8"/><rect x="1278.40" y="251.8" width="19.40" height="20.2" fill="#0c1c66"/><rect x="1278.80" y="254.1" width="18.60" height="2.1" fill="#1c2e8c"/><rect x="1278.80" y="257" width="18.60" height="2.0" fill="#1c2e8c"/><rect x="1278.80" y="260" width="18.60" height="1.4" fill="#182888"/><rect x="1278.80" y="261.7" width="18.60" height="2.0" fill="#1a2c8c"/><rect x="1278.80" y="267" width="18.60" height="2.0" fill="#1c2e8c"/><rect x="1278.80" y="269.8" width="18.60" height="1.8" fill="#182888"/><rect x="1297.80" y="251.8" width="19.40" height="20.2" fill="#0c1c66"/><rect x="1298.20" y="254.1" width="18.60" height="2.1" fill="#3a9ccc"/><rect x="1298.20" y="257" width="18.60" height="2.0" fill="#4aa8cc"/><rect x="1298.20" y="260" width="18.60" height="1.4" fill="#2a5eb0"/><rect x="1298.20" y="261.7" width="18.60" height="2.0" fill="#3268bc"/><rect x="1298.20" y="267" width="18.60" height="2.0" fill="#4a9ccc"/><rect x="1298.20" y="269.8" width="18.60" height="1.8" fill="#3268bc"/><rect x="1317.20" y="251.8" width="19.40" height="20.2" fill="#0c1c66"/><rect x="1317.60" y="254.1" width="18.60" height="2.1" fill="#3a9ccc"/><rect x="1317.60" y="257" width="18.60" height="2.0" fill="#4aa8cc"/><rect x="1317.60" y="260" width="18.60" height="1.4" fill="#2a5eb0"/><rect x="1317.60" y="261.7" width="18.60" height="2.0" fill="#3268bc"/><rect x="1317.60" y="267" width="18.60" height="2.0" fill="#4a9ccc"/><rect x="1317.60" y="269.8" width="18.60" height="1.8" fill="#3268bc"/><rect x="1143.20" y="284.9" width="18.20" height="2.2" fill="#2a4aa0"/><rect x="1162.60" y="284.9" width="18.20" height="2.2" fill="#2a4aa0"/><rect x="1182.00" y="284.9" width="18.20" height="2.2" fill="#2a4aa0"/><rect x="1201.40" y="284.9" width="18.20" height="2.2" fill="#3f9cc0"/><rect x="1220.80" y="284.9" width="18.20" height="2.2" fill="#3f9cc0"/><rect x="1240.20" y="284.9" width="18.20" height="2.2" fill="#3f9cc0"/><rect x="1259.60" y="284.9" width="18.20" height="2.2" fill="#3f9cc0"/><rect x="1298.40" y="284.9" width="18.20" height="2.2" fill="#2a4aa0"/><rect x="1317.80" y="284.9" width="18.20" height="2.2" fill="#2a4aa0"/></svg>
<div class="a" style="left:11.00px;top:345.00px;width:1377.00px;height:1px;background:#24262b"></div>
<div class="t" style="left:23.40px;top:327.29px;font-size:11px;line-height:11px;color:#d8d9e3;font-weight:normal;">Breakdown</div>
<div class="a" style="left:11.3px;top:342.2px;width:79.5px;height:3px;border-radius:2px;background:linear-gradient(90deg,#f5813e,#f06840);"></div>
<div class="t" style="left:102.40px;top:327.03px;font-size:11.3px;line-height:11.3px;color:#a8a9b3;font-weight:normal;">Service structure</div>
<div class="t" style="left:211.60px;top:327.29px;font-size:11px;line-height:11px;color:#a8a9b3;font-weight:normal;">Comparison</div>
<div class="t" style="left:295.60px;top:327.88px;font-size:10.3px;line-height:10.3px;color:#a8a9b3;font-weight:normal;">Traces</div>
<div class="a" style="left:334.3px;top:326.5px;width:29.2px;height:13.3px;border-radius:7px;background:#2a2c31;"></div>
<div class="t" style="left:348.90px;transform:translateX(-50%);top:328.26px;font-size:9.5px;line-height:9.5px;color:#c4c5cf;font-weight:normal;">200</div>
<div class="a" style="left:1361.4px;top:319.3px;width:27.3px;height:23.7px;background:#202226;border-radius:2px;"></div>
<svg class="a" style="left:1368.5px;top:325px" width="13" height="13" viewBox="0 0 13 13"><circle cx="10.2" cy="2.6" r="1.9" fill="none" stroke="#c8c9d3" stroke-width="1.1"/><circle cx="2.6" cy="6.5" r="1.9" fill="none" stroke="#c8c9d3" stroke-width="1.1"/><circle cx="10.2" cy="10.4" r="1.9" fill="none" stroke="#c8c9d3" stroke-width="1.1"/><path d="M4.3 5.6l4.2-2.2M4.3 7.4l4.2 2.2" stroke="#c8c9d3" stroke-width="1.1"/></svg>
<div class="t" style="left:12.00px;top:360.08px;font-size:11.25px;line-height:11.25px;color:#d0d0dc;font-weight:normal;">Attributes are ordered by their rate of requests per second.</div>
<div class="a" style="left:316.9px;top:364.5px;width:11.7px;height:3px;background:#1a9a2a;border-radius:1px"></div>
<div class="t" style="left:334.60px;top:360.08px;font-size:11.25px;line-height:11.25px;color:#d0d0dc;font-weight:normal;">Rate</div>
<div class="a" style="left:368px;top:364.5px;width:12.4px;height:3px;background:#e0202a;border-radius:1px"></div>
<div class="t" style="left:385.70px;top:360.08px;font-size:11.25px;line-height:11.25px;color:#d0d0dc;font-weight:normal;">Error</div>
<div class="t" style="left:11.60px;top:386.70px;font-size:9.8px;line-height:9.8px;color:#d0d0dc;font-weight:normal;-webkit-text-stroke:0.35px #d0d0dc;">Scope</div>
<div class="a" style="left:11.2px;top:399.6px;width:124.5px;height:23.8px;background:#16171b;border:1px solid #2c2e33;box-sizing:border-box;border-radius:2px;"></div>
<div class="a" style="left:14px;top:402px;width:70.6px;height:19.2px;background:#2a2c31;border-radius:2px;"></div>
<div class="t" style="left:25.50px;top:406.09px;font-size:11px;line-height:11px;color:#e0e0ea;font-weight:normal;-webkit-text-stroke:0.3px #e0e0ea;">Resource</div>
<div class="t" style="left:96.50px;top:406.09px;font-size:11px;line-height:11px;color:#8e8f99;font-weight:normal;">Span</div>
<div class="t" style="left:147.70px;top:386.87px;font-size:9.6px;line-height:9.6px;color:#d0d0dc;font-weight:normal;-webkit-text-stroke:0.35px #d0d0dc;">Group by</div>
<div class="a" style="left:147.2px;top:399.6px;width:181.4px;height:23.8px;background:#16171b;border:1px solid #2c2e33;box-sizing:border-box;border-radius:2px;"></div>
<div class="a" style="left:150px;top:402px;width:90.8px;height:19.2px;background:#2a2c31;border-radius:2px;"></div>
<div class="t" style="left:161.70px;top:405.92px;font-size:11.2px;line-height:11.2px;color:#e0e0ea;font-weight:normal;-webkit-text-stroke:0.3px #e0e0ea;">service.name</div>
<div class="t" style="left:252.90px;top:406.00px;font-size:11.1px;line-height:11.1px;color:#8e8f99;font-weight:normal;">environment</div>
<div class="a" style="left:334px;top:399.6px;width:129.6px;height:23.8px;background:#111217;border:1px solid #2a2c31;box-sizing:border-box;border-radius:2px;"></div>
<div class="t" style="left:342.00px;top:405.88px;font-size:11.25px;line-height:11.25px;color:#a8a9b3;font-weight:normal;">Other attributes</div>
<svg class="a" style="left:448.50px;top:409.25px" width="7" height="4.5"><path d="M1 1 L3.5 3.5 L6 1" fill="none" stroke="#b8b9c3" stroke-width="1.2" stroke-linecap="round" stroke-linejoin="round"/></svg>
<div class="t" style="left:1234.30px;top:386.50px;font-size:9.8px;line-height:9.8px;color:#d0d0dc;font-weight:normal;-webkit-text-stroke:0.35px #d0d0dc;">View</div>
<div class="a" style="left:1234.3px;top:400.2px;width:153.6px;height:23.2px;background:#16171b;border:1px solid #2c2e33;box-sizing:border-box;border-radius:2px;"></div>
<div class="a" style="left:1290.5px;top:402px;width:45.2px;height:19px;background:#2a2c31;border-radius:2px;"></div>
<div class="t" style="left:1248.00px;top:406.09px;font-size:11px;line-height:11px;color:#8e8f99;font-weight:normal;">Single</div>
<div class="t" style="left:1302.50px;top:406.09px;font-size:11px;line-height:11px;color:#e0e0ea;font-weight:normal;-webkit-text-stroke:0.3px #e0e0ea;">Grid</div>
<div class="t" style="left:1347.00px;top:406.09px;font-size:11px;line-height:11px;color:#8e8f99;font-weight:normal;">Rows</div>
<div class="a" style="left:11.2px;top:434.8px;width:1376.8px;height:23.5px;background:#111217;border:1px solid #2a2c31;box-sizing:border-box;border-radius:2px;"></div>
<svg class="a" style="left:17.5px;top:440.5px" width="12" height="12" viewBox="0 0 12 12"><circle cx="5" cy="5" r="4.1" fill="none" stroke="#a8a9b3" stroke-width="1.2"/><path d="M8 8 L11 11" stroke="#a8a9b3" stroke-width="1.2" stroke-linecap="round"/></svg>
<div class="t" style="left:32.70px;top:441.19px;font-size:11px;line-height:11px;color:#8e8f99;font-weight:normal;">Search</div>
<div class="a" style="left:11px;top:464.4px;width:340px;height:146.9px;background:#1a1c20;border:1px solid #25272d;box-sizing:border-box;border-radius:2px;"></div>
<div class="a" style="left:17.00px;top:471.60px;width:82px;height:11.5px;background:#727378;border-radius:6px;filter:blur(3px);"></div>
<div class="t" style="right:1071.60px;top:471.74px;font-size:10px;line-height:10px;color:#6e9fff;font-weight:normal;">Add to filters</div>
<svg class="a" style="left:269.80px;top:471.10px" width="11" height="11" viewBox="0 0 11 11"><circle cx="4.8" cy="4.8" r="3.9" fill="none" stroke="#6e9fff" stroke-width="1.1"/><path d="M4.8 3v3.6M3 4.8h3.6M7.6 7.6l2.6 2.6" stroke="#6e9fff" stroke-width="1.1" stroke-linecap="round"/></svg>
<div class="a" style="left:59.80px;top:510.50px;width:277.60px;height:1px;background:rgba(204,204,220,0.075)"></div>
<div class="t" style="right:1355.10px;top:505.71px;font-size:9.6px;line-height:9.6px;color:#c4c5cf;font-weight:normal;-webkit-text-stroke:0.2px #c4c5cf;">3</div>
<div class="a" style="left:59.80px;top:523.57px;width:277.60px;height:1px;background:rgba(204,204,220,0.075)"></div>
<div class="t" style="right:1355.10px;top:518.78px;font-size:9.6px;line-height:9.6px;color:#c4c5cf;font-weight:normal;-webkit-text-stroke:0.2px #c4c5cf;">2.5</div>
<div class="a" style="left:59.80px;top:536.63px;width:277.60px;height:1px;background:rgba(204,204,220,0.075)"></div>
<div class="t" style="right:1355.10px;top:531.84px;font-size:9.6px;line-height:9.6px;color:#c4c5cf;font-weight:normal;-webkit-text-stroke:0.2px #c4c5cf;">2</div>
<div class="a" style="left:59.80px;top:549.70px;width:277.60px;height:1px;background:rgba(204,204,220,0.075)"></div>
<div class="t" style="right:1355.10px;top:544.91px;font-size:9.6px;line-height:9.6px;color:#c4c5cf;font-weight:normal;-webkit-text-stroke:0.2px #c4c5cf;">1.5</div>
<div class="a" style="left:59.80px;top:562.77px;width:277.60px;height:1px;background:rgba(204,204,220,0.075)"></div>
<div class="t" style="right:1355.10px;top:557.98px;font-size:9.6px;line-height:9.6px;color:#c4c5cf;font-weight:normal;-webkit-text-stroke:0.2px #c4c5cf;">1</div>
<div class="a" style="left:59.80px;top:575.84px;width:277.60px;height:1px;background:rgba(204,204,220,0.075)"></div>
<div class="t" style="right:1355.10px;top:571.05px;font-size:9.6px;line-height:9.6px;color:#c4c5cf;font-weight:normal;-webkit-text-stroke:0.2px #c4c5cf;">0.5</div>
<div class="a" style="left:59.80px;top:588.90px;width:277.60px;height:1px;background:rgba(204,204,220,0.075)"></div>
<div class="t" style="right:1355.10px;top:584.11px;font-size:9.6px;line-height:9.6px;color:#c4c5cf;font-weight:normal;-webkit-text-stroke:0.2px #c4c5cf;">0</div>
<div class="t" style="left:22.00px;top:545.40px;font-size:9.5px;line-height:9.5px;color:#c4c5cf;transform:translate(-50%,-50%) rotate(-90deg);-webkit-text-stroke:0.2px #c4c5cf;">Rate</div>
<div class="t" style="left:63.70px;transform:translateX(-50%);top:595.17px;font-size:9.6px;line-height:9.6px;color:#c4c5cf;font-weight:normal;-webkit-text-stroke:0.2px #c4c5cf;">09:20</div>
<div class="a" style="left:109.90px;top:500.20px;width:1px;height:89.20px;background:rgba(204,204,220,0.075)"></div>
<div class="t" style="left:110.40px;transform:translateX(-50%);top:595.17px;font-size:9.6px;line-height:9.6px;color:#c4c5cf;font-weight:normal;-webkit-text-stroke:0.2px #c4c5cf;">09:30</div>
<div class="a" style="left:156.60px;top:500.20px;width:1px;height:89.20px;background:rgba(204,204,220,0.075)"></div>
<div class="t" style="left:157.10px;transform:translateX(-50%);top:595.17px;font-size:9.6px;line-height:9.6px;color:#c4c5cf;font-weight:normal;-webkit-text-stroke:0.2px #c4c5cf;">09:40</div>
<div class="a" style="left:203.30px;top:500.20px;width:1px;height:89.20px;background:rgba(204,204,220,0.075)"></div>
<div class="t" style="left:203.80px;transform:translateX(-50%);top:595.17px;font-size:9.6px;line-height:9.6px;color:#c4c5cf;font-weight:normal;-webkit-text-stroke:0.2px #c4c5cf;">09:50</div>
<div class="a" style="left:250.00px;top:500.20px;width:1px;height:89.20px;background:rgba(204,204,220,0.075)"></div>
<div class="t" style="left:250.50px;transform:translateX(-50%);top:595.17px;font-size:9.6px;line-height:9.6px;color:#c4c5cf;font-weight:normal;-webkit-text-stroke:0.2px #c4c5cf;">10:00</div>
<div class="a" style="left:296.70px;top:500.20px;width:1px;height:89.20px;background:rgba(204,204,220,0.075)"></div>
<div class="t" style="left:297.20px;transform:translateX(-50%);top:595.17px;font-size:9.6px;line-height:9.6px;color:#c4c5cf;font-weight:normal;-webkit-text-stroke:0.2px #c4c5cf;">10:10</div>
<div class="a" style="left:11px;top:617.5px;width:340px;height:300px;background:#1a1c20;border:1px solid #25272d;box-sizing:border-box;border-radius:2px;"></div>
<div class="a" style="left:17.00px;top:624.70px;width:72px;height:11.5px;background:#727378;border-radius:6px;filter:blur(3px);"></div>
<div class="t" style="right:1071.60px;top:624.84px;font-size:10px;line-height:10px;color:#6e9fff;font-weight:normal;">Add to filters</div>
<svg class="a" style="left:269.80px;top:624.20px" width="11" height="11" viewBox="0 0 11 11"><circle cx="4.8" cy="4.8" r="3.9" fill="none" stroke="#6e9fff" stroke-width="1.1"/><path d="M4.8 3v3.6M3 4.8h3.6M7.6 7.6l2.6 2.6" stroke="#6e9fff" stroke-width="1.1" stroke-linecap="round"/></svg>
<div class="a" style="left:59.80px;top:663.60px;width:277.60px;height:1px;background:rgba(204,204,220,0.075)"></div>
<div class="t" style="right:1355.10px;top:658.81px;font-size:9.6px;line-height:9.6px;color:#c4c5cf;font-weight:normal;-webkit-text-stroke:0.2px #c4c5cf;">3</div>
<div class="a" style="left:109.90px;top:653.30px;width:1px;height:89.20px;background:rgba(204,204,220,0.075)"></div>
<div class="a" style="left:156.60px;top:653.30px;width:1px;height:89.20px;background:rgba(204,204,220,0.075)"></div>
<div class="a" style="left:203.30px;top:653.30px;width:1px;height:89.20px;background:rgba(204,204,220,0.075)"></div>
<div class="a" style="left:250.00px;top:653.30px;width:1px;height:89.20px;background:rgba(204,204,220,0.075)"></div>
<div class="a" style="left:296.70px;top:653.30px;width:1px;height:89.20px;background:rgba(204,204,220,0.075)"></div>
<div class="a" style="left:357px;top:464.4px;width:339.5px;height:146.9px;background:#1a1c20;border:1px solid #25272d;box-sizing:border-box;border-radius:2px;"></div>
<div class="a" style="left:363.00px;top:471.60px;width:44px;height:11.5px;background:#727378;border-radius:6px;filter:blur(3px);"></div>
<div class="t" style="right:726.10px;top:471.74px;font-size:10px;line-height:10px;color:#6e9fff;font-weight:normal;">Add to filters</div>
<svg class="a" style="left:615.30px;top:471.10px" width="11" height="11" viewBox="0 0 11 11"><circle cx="4.8" cy="4.8" r="3.9" fill="none" stroke="#6e9fff" stroke-width="1.1"/><path d="M4.8 3v3.6M3 4.8h3.6M7.6 7.6l2.6 2.6" stroke="#6e9fff" stroke-width="1.1" stroke-linecap="round"/></svg>
<div class="a" style="left:405.80px;top:510.50px;width:277.60px;height:1px;background:rgba(204,204,220,0.075)"></div>
<div class="t" style="right:1009.10px;top:505.71px;font-size:9.6px;line-height:9.6px;color:#c4c5cf;font-weight:normal;-webkit-text-stroke:0.2px #c4c5cf;">3</div>
<div class="a" style="left:405.80px;top:523.57px;width:277.60px;height:1px;background:rgba(204,204,220,0.075)"></div>
<div class="t" style="right:1009.10px;top:518.78px;font-size:9.6px;line-height:9.6px;color:#c4c5cf;font-weight:normal;-webkit-text-stroke:0.2px #c4c5cf;">2.5</div>
<div class="a" style="left:405.80px;top:536.63px;width:277.60px;height:1px;background:rgba(204,204,220,0.075)"></div>
<div class="t" style="right:1009.10px;top:531.84px;font-size:9.6px;line-height:9.6px;color:#c4c5cf;font-weight:normal;-webkit-text-stroke:0.2px #c4c5cf;">2</div>
<div class="a" style="left:405.80px;top:549.70px;width:277.60px;height:1px;background:rgba(204,204,220,0.075)"></div>
<div class="t" style="right:1009.10px;top:544.91px;font-size:9.6px;line-height:9.6px;color:#c4c5cf;font-weight:normal;-webkit-text-stroke:0.2px #c4c5cf;">1.5</div>
<div class="a" style="left:405.80px;top:562.77px;width:277.60px;height:1px;background:rgba(204,204,220,0.075)"></div>
<div class="t" style="right:1009.10px;top:557.98px;font-size:9.6px;line-height:9.6px;color:#c4c5cf;font-weight:normal;-webkit-text-stroke:0.2px #c4c5cf;">1</div>
<div class="a" style="left:405.80px;top:575.84px;width:277.60px;height:1px;background:rgba(204,204,220,0.075)"></div>
<div class="t" style="right:1009.10px;top:571.05px;font-size:9.6px;line-height:9.6px;color:#c4c5cf;font-weight:normal;-webkit-text-stroke:0.2px #c4c5cf;">0.5</div>
<div class="a" style="left:405.80px;top:588.90px;width:277.60px;height:1px;background:rgba(204,204,220,0.075)"></div>
<div class="t" style="right:1009.10px;top:584.11px;font-size:9.6px;line-height:9.6px;color:#c4c5cf;font-weight:normal;-webkit-text-stroke:0.2px #c4c5cf;">0</div>
<div class="t" style="left:368.00px;top:545.40px;font-size:9.5px;line-height:9.5px;color:#c4c5cf;transform:translate(-50%,-50%) rotate(-90deg);-webkit-text-stroke:0.2px #c4c5cf;">Rate</div>
<div class="a" style="left:409.20px;top:500.20px;width:1px;height:89.20px;background:rgba(204,204,220,0.075)"></div>
<div class="t" style="left:409.70px;transform:translateX(-50%);top:595.17px;font-size:9.6px;line-height:9.6px;color:#c4c5cf;font-weight:normal;-webkit-text-stroke:0.2px #c4c5cf;">09:20</div>
<div class="a" style="left:455.90px;top:500.20px;width:1px;height:89.20px;background:rgba(204,204,220,0.075)"></div>
<div class="t" style="left:456.40px;transform:translateX(-50%);top:595.17px;font-size:9.6px;line-height:9.6px;color:#c4c5cf;font-weight:normal;-webkit-text-stroke:0.2px #c4c5cf;">09:30</div>
<div class="a" style="left:502.60px;top:500.20px;width:1px;height:89.20px;background:rgba(204,204,220,0.075)"></div>
<div class="t" style="left:503.10px;transform:translateX(-50%);top:595.17px;font-size:9.6px;line-height:9.6px;color:#c4c5cf;font-weight:normal;-webkit-text-stroke:0.2px #c4c5cf;">09:40</div>
<div class="a" style="left:549.30px;top:500.20px;width:1px;height:89.20px;background:rgba(204,204,220,0.075)"></div>
<div class="t" style="left:549.80px;transform:translateX(-50%);top:595.17px;font-size:9.6px;line-height:9.6px;color:#c4c5cf;font-weight:normal;-webkit-text-stroke:0.2px #c4c5cf;">09:50</div>
<div class="a" style="left:596.00px;top:500.20px;width:1px;height:89.20px;background:rgba(204,204,220,0.075)"></div>
<div class="t" style="left:596.50px;transform:translateX(-50%);top:595.17px;font-size:9.6px;line-height:9.6px;color:#c4c5cf;font-weight:normal;-webkit-text-stroke:0.2px #c4c5cf;">10:00</div>
<div class="a" style="left:642.70px;top:500.20px;width:1px;height:89.20px;background:rgba(204,204,220,0.075)"></div>
<div class="t" style="left:643.20px;transform:translateX(-50%);top:595.17px;font-size:9.6px;line-height:9.6px;color:#c4c5cf;font-weight:normal;-webkit-text-stroke:0.2px #c4c5cf;">10:10</div>
<div class="a" style="left:357px;top:617.5px;width:339.5px;height:300px;background:#1a1c20;border:1px solid #25272d;box-sizing:border-box;border-radius:2px;"></div>
<div class="a" style="left:363.00px;top:624.70px;width:23px;height:11.5px;background:#727378;border-radius:6px;filter:blur(3px);"></div>
<div class="t" style="right:726.10px;top:624.84px;font-size:10px;line-height:10px;color:#6e9fff;font-weight:normal;">Add to filters</div>
<svg class="a" style="left:615.30px;top:624.20px" width="11" height="11" viewBox="0 0 11 11"><circle cx="4.8" cy="4.8" r="3.9" fill="none" stroke="#6e9fff" stroke-width="1.1"/><path d="M4.8 3v3.6M3 4.8h3.6M7.6 7.6l2.6 2.6" stroke="#6e9fff" stroke-width="1.1" stroke-linecap="round"/></svg>
<div class="a" style="left:405.80px;top:663.60px;width:277.60px;height:1px;background:rgba(204,204,220,0.075)"></div>
<div class="t" style="right:1009.10px;top:658.81px;font-size:9.6px;line-height:9.6px;color:#c4c5cf;font-weight:normal;-webkit-text-stroke:0.2px #c4c5cf;">3</div>
<div class="a" style="left:409.20px;top:653.30px;width:1px;height:89.20px;background:rgba(204,204,220,0.075)"></div>
<div class="a" style="left:455.90px;top:653.30px;width:1px;height:89.20px;background:rgba(204,204,220,0.075)"></div>
<div class="a" style="left:502.60px;top:653.30px;width:1px;height:89.20px;background:rgba(204,204,220,0.075)"></div>
<div class="a" style="left:549.30px;top:653.30px;width:1px;height:89.20px;background:rgba(204,204,220,0.075)"></div>
<div class="a" style="left:596.00px;top:653.30px;width:1px;height:89.20px;background:rgba(204,204,220,0.075)"></div>
<div class="a" style="left:642.70px;top:653.30px;width:1px;height:89.20px;background:rgba(204,204,220,0.075)"></div>
<div class="a" style="left:703px;top:464.4px;width:338.5px;height:146.9px;background:#1a1c20;border:1px solid #25272d;box-sizing:border-box;border-radius:2px;"></div>
<div class="a" style="left:709.00px;top:471.60px;width:21px;height:11.5px;background:#727378;border-radius:6px;filter:blur(3px);"></div>
<div class="t" style="right:381.10px;top:471.74px;font-size:10px;line-height:10px;color:#6e9fff;font-weight:normal;">Add to filters</div>
<svg class="a" style="left:960.30px;top:471.10px" width="11" height="11" viewBox="0 0 11 11"><circle cx="4.8" cy="4.8" r="3.9" fill="none" stroke="#6e9fff" stroke-width="1.1"/><path d="M4.8 3v3.6M3 4.8h3.6M7.6 7.6l2.6 2.6" stroke="#6e9fff" stroke-width="1.1" stroke-linecap="round"/></svg>
<div class="a" style="left:751.80px;top:510.50px;width:277.60px;height:1px;background:rgba(204,204,220,0.075)"></div>
<div class="t" style="right:663.10px;top:505.71px;font-size:9.6px;line-height:9.6px;color:#c4c5cf;font-weight:normal;-webkit-text-stroke:0.2px #c4c5cf;">3</div>
<div class="a" style="left:751.80px;top:523.57px;width:277.60px;height:1px;background:rgba(204,204,220,0.075)"></div>
<div class="t" style="right:663.10px;top:518.78px;font-size:9.6px;line-height:9.6px;color:#c4c5cf;font-weight:normal;-webkit-text-stroke:0.2px #c4c5cf;">2.5</div>
<div class="a" style="left:751.80px;top:536.63px;width:277.60px;height:1px;background:rgba(204,204,220,0.075)"></div>
<div class="t" style="right:663.10px;top:531.84px;font-size:9.6px;line-height:9.6px;color:#c4c5cf;font-weight:normal;-webkit-text-stroke:0.2px #c4c5cf;">2</div>
<div class="a" style="left:751.80px;top:549.70px;width:277.60px;height:1px;background:rgba(204,204,220,0.075)"></div>
<div class="t" style="right:663.10px;top:544.91px;font-size:9.6px;line-height:9.6px;color:#c4c5cf;font-weight:normal;-webkit-text-stroke:0.2px #c4c5cf;">1.5</div>
<div class="a" style="left:751.80px;top:562.77px;width:277.60px;height:1px;background:rgba(204,204,220,0.075)"></div>
<div class="t" style="right:663.10px;top:557.98px;font-size:9.6px;line-height:9.6px;color:#c4c5cf;font-weight:normal;-webkit-text-stroke:0.2px #c4c5cf;">1</div>
<div class="a" style="left:751.80px;top:575.84px;width:277.60px;height:1px;background:rgba(204,204,220,0.075)"></div>
<div class="t" style="right:663.10px;top:571.05px;font-size:9.6px;line-height:9.6px;color:#c4c5cf;font-weight:normal;-webkit-text-stroke:0.2px #c4c5cf;">0.5</div>
<div class="a" style="left:751.80px;top:588.90px;width:277.60px;height:1px;background:rgba(204,204,220,0.075)"></div>
<div class="t" style="right:663.10px;top:584.11px;font-size:9.6px;line-height:9.6px;color:#c4c5cf;font-weight:normal;-webkit-text-stroke:0.2px #c4c5cf;">0</div>
<div class="t" style="left:714.00px;top:545.40px;font-size:9.5px;line-height:9.5px;color:#c4c5cf;transform:translate(-50%,-50%) rotate(-90deg);-webkit-text-stroke:0.2px #c4c5cf;">Rate</div>
<div class="a" style="left:755.20px;top:500.20px;width:1px;height:89.20px;background:rgba(204,204,220,0.075)"></div>
<div class="t" style="left:755.70px;transform:translateX(-50%);top:595.17px;font-size:9.6px;line-height:9.6px;color:#c4c5cf;font-weight:normal;-webkit-text-stroke:0.2px #c4c5cf;">09:20</div>
<div class="a" style="left:801.90px;top:500.20px;width:1px;height:89.20px;background:rgba(204,204,220,0.075)"></div>
<div class="t" style="left:802.40px;transform:translateX(-50%);top:595.17px;font-size:9.6px;line-height:9.6px;color:#c4c5cf;font-weight:normal;-webkit-text-stroke:0.2px #c4c5cf;">09:30</div>
<div class="a" style="left:848.60px;top:500.20px;width:1px;height:89.20px;background:rgba(204,204,220,0.075)"></div>
<div class="t" style="left:849.10px;transform:translateX(-50%);top:595.17px;font-size:9.6px;line-height:9.6px;color:#c4c5cf;font-weight:normal;-webkit-text-stroke:0.2px #c4c5cf;">09:40</div>
<div class="a" style="left:895.30px;top:500.20px;width:1px;height:89.20px;background:rgba(204,204,220,0.075)"></div>
<div class="t" style="left:895.80px;transform:translateX(-50%);top:595.17px;font-size:9.6px;line-height:9.6px;color:#c4c5cf;font-weight:normal;-webkit-text-stroke:0.2px #c4c5cf;">09:50</div>
<div class="a" style="left:942.00px;top:500.20px;width:1px;height:89.20px;background:rgba(204,204,220,0.075)"></div>
<div class="t" style="left:942.50px;transform:translateX(-50%);top:595.17px;font-size:9.6px;line-height:9.6px;color:#c4c5cf;font-weight:normal;-webkit-text-stroke:0.2px #c4c5cf;">10:00</div>
<div class="a" style="left:988.70px;top:500.20px;width:1px;height:89.20px;background:rgba(204,204,220,0.075)"></div>
<div class="t" style="left:989.20px;transform:translateX(-50%);top:595.17px;font-size:9.6px;line-height:9.6px;color:#c4c5cf;font-weight:normal;-webkit-text-stroke:0.2px #c4c5cf;">10:10</div>
<div class="a" style="left:703px;top:617.5px;width:338.5px;height:300px;background:#1a1c20;border:1px solid #25272d;box-sizing:border-box;border-radius:2px;"></div>
<div class="a" style="left:709.00px;top:624.70px;width:42px;height:11.5px;background:#727378;border-radius:6px;filter:blur(3px);"></div>
<div class="t" style="right:381.10px;top:624.84px;font-size:10px;line-height:10px;color:#6e9fff;font-weight:normal;">Add to filters</div>
<svg class="a" style="left:960.30px;top:624.20px" width="11" height="11" viewBox="0 0 11 11"><circle cx="4.8" cy="4.8" r="3.9" fill="none" stroke="#6e9fff" stroke-width="1.1"/><path d="M4.8 3v3.6M3 4.8h3.6M7.6 7.6l2.6 2.6" stroke="#6e9fff" stroke-width="1.1" stroke-linecap="round"/></svg>
<div class="a" style="left:751.80px;top:663.60px;width:277.60px;height:1px;background:rgba(204,204,220,0.075)"></div>
<div class="t" style="right:663.10px;top:658.81px;font-size:9.6px;line-height:9.6px;color:#c4c5cf;font-weight:normal;-webkit-text-stroke:0.2px #c4c5cf;">3</div>
<div class="a" style="left:755.20px;top:653.30px;width:1px;height:89.20px;background:rgba(204,204,220,0.075)"></div>
<div class="a" style="left:801.90px;top:653.30px;width:1px;height:89.20px;background:rgba(204,204,220,0.075)"></div>
<div class="a" style="left:848.60px;top:653.30px;width:1px;height:89.20px;background:rgba(204,204,220,0.075)"></div>
<div class="a" style="left:895.30px;top:653.30px;width:1px;height:89.20px;background:rgba(204,204,220,0.075)"></div>
<div class="a" style="left:942.00px;top:653.30px;width:1px;height:89.20px;background:rgba(204,204,220,0.075)"></div>
<div class="a" style="left:988.70px;top:653.30px;width:1px;height:89.20px;background:rgba(204,204,220,0.075)"></div>
<div class="a" style="left:1049px;top:464.4px;width:339px;height:146.9px;background:#1a1c20;border:1px solid #25272d;box-sizing:border-box;border-radius:2px;"></div>
<div class="a" style="left:1055.00px;top:471.60px;width:24px;height:11.5px;background:#727378;border-radius:6px;filter:blur(3px);"></div>
<div class="t" style="right:34.60px;top:471.74px;font-size:10px;line-height:10px;color:#6e9fff;font-weight:normal;">Add to filters</div>
<svg class="a" style="left:1306.80px;top:471.10px" width="11" height="11" viewBox="0 0 11 11"><circle cx="4.8" cy="4.8" r="3.9" fill="none" stroke="#6e9fff" stroke-width="1.1"/><path d="M4.8 3v3.6M3 4.8h3.6M7.6 7.6l2.6 2.6" stroke="#6e9fff" stroke-width="1.1" stroke-linecap="round"/></svg>
<div class="a" style="left:1097.10px;top:510.50px;width:277.60px;height:1px;background:rgba(204,204,220,0.075)"></div>
<div class="t" style="right:317.80px;top:505.71px;font-size:9.6px;line-height:9.6px;color:#c4c5cf;font-weight:normal;-webkit-text-stroke:0.2px #c4c5cf;">3</div>
<div class="a" style="left:1097.10px;top:523.57px;width:277.60px;height:1px;background:rgba(204,204,220,0.075)"></div>
<div class="t" style="right:317.80px;top:518.78px;font-size:9.6px;line-height:9.6px;color:#c4c5cf;font-weight:normal;-webkit-text-stroke:0.2px #c4c5cf;">2.5</div>
<div class="a" style="left:1097.10px;top:536.63px;width:277.60px;height:1px;background:rgba(204,204,220,0.075)"></div>
<div class="t" style="right:317.80px;top:531.84px;font-size:9.6px;line-height:9.6px;color:#c4c5cf;font-weight:normal;-webkit-text-stroke:0.2px #c4c5cf;">2</div>
<div class="a" style="left:1097.10px;top:549.70px;width:277.60px;height:1px;background:rgba(204,204,220,0.075)"></div>
<div class="t" style="right:317.80px;top:544.91px;font-size:9.6px;line-height:9.6px;color:#c4c5cf;font-weight:normal;-webkit-text-stroke:0.2px #c4c5cf;">1.5</div>
<div class="a" style="left:1097.10px;top:562.77px;width:277.60px;height:1px;background:rgba(204,204,220,0.075)"></div>
<div class="t" style="right:317.80px;top:557.98px;font-size:9.6px;line-height:9.6px;color:#c4c5cf;font-weight:normal;-webkit-text-stroke:0.2px #c4c5cf;">1</div>
<div class="a" style="left:1097.10px;top:575.84px;width:277.60px;height:1px;background:rgba(204,204,220,0.075)"></div>
<div class="t" style="right:317.80px;top:571.05px;font-size:9.6px;line-height:9.6px;color:#c4c5cf;font-weight:normal;-webkit-text-stroke:0.2px #c4c5cf;">0.5</div>
<div class="a" style="left:1097.10px;top:588.90px;width:277.60px;height:1px;background:rgba(204,204,220,0.075)"></div>
<div class="t" style="right:317.80px;top:584.11px;font-size:9.6px;line-height:9.6px;color:#c4c5cf;font-weight:normal;-webkit-text-stroke:0.2px #c4c5cf;">0</div>
<div class="t" style="left:1059.30px;top:545.40px;font-size:9.5px;line-height:9.5px;color:#c4c5cf;transform:translate(-50%,-50%) rotate(-90deg);-webkit-text-stroke:0.2px #c4c5cf;">Rate</div>
<div class="a" style="left:1100.50px;top:500.20px;width:1px;height:89.20px;background:rgba(204,204,220,0.075)"></div>
<div class="t" style="left:1101.00px;transform:translateX(-50%);top:595.17px;font-size:9.6px;line-height:9.6px;color:#c4c5cf;font-weight:normal;-webkit-text-stroke:0.2px #c4c5cf;">09:20</div>
<div class="a" style="left:1147.20px;top:500.20px;width:1px;height:89.20px;background:rgba(204,204,220,0.075)"></div>
<div class="t" style="left:1147.70px;transform:translateX(-50%);top:595.17px;font-size:9.6px;line-height:9.6px;color:#c4c5cf;font-weight:normal;-webkit-text-stroke:0.2px #c4c5cf;">09:30</div>
<div class="a" style="left:1193.90px;top:500.20px;width:1px;height:89.20px;background:rgba(204,204,220,0.075)"></div>
<div class="t" style="left:1194.40px;transform:translateX(-50%);top:595.17px;font-size:9.6px;line-height:9.6px;color:#c4c5cf;font-weight:normal;-webkit-text-stroke:0.2px #c4c5cf;">09:40</div>
<div class="a" style="left:1240.60px;top:500.20px;width:1px;height:89.20px;background:rgba(204,204,220,0.075)"></div>
<div class="t" style="left:1241.10px;transform:translateX(-50%);top:595.17px;font-size:9.6px;line-height:9.6px;color:#c4c5cf;font-weight:normal;-webkit-text-stroke:0.2px #c4c5cf;">09:50</div>
<div class="a" style="left:1287.30px;top:500.20px;width:1px;height:89.20px;background:rgba(204,204,220,0.075)"></div>
<div class="t" style="left:1287.80px;transform:translateX(-50%);top:595.17px;font-size:9.6px;line-height:9.6px;color:#c4c5cf;font-weight:normal;-webkit-text-stroke:0.2px #c4c5cf;">10:00</div>
<div class="a" style="left:1334.00px;top:500.20px;width:1px;height:89.20px;background:rgba(204,204,220,0.075)"></div>
<div class="t" style="left:1334.50px;transform:translateX(-50%);top:595.17px;font-size:9.6px;line-height:9.6px;color:#c4c5cf;font-weight:normal;-webkit-text-stroke:0.2px #c4c5cf;">10:10</div>
<div class="a" style="left:1049px;top:617.5px;width:339px;height:300px;background:#1a1c20;border:1px solid #25272d;box-sizing:border-box;border-radius:2px;"></div>
<div class="a" style="left:1055.00px;top:624.70px;width:52px;height:11.5px;background:#727378;border-radius:6px;filter:blur(3px);"></div>
<div class="t" style="right:34.60px;top:624.84px;font-size:10px;line-height:10px;color:#6e9fff;font-weight:normal;">Add to filters</div>
<svg class="a" style="left:1306.80px;top:624.20px" width="11" height="11" viewBox="0 0 11 11"><circle cx="4.8" cy="4.8" r="3.9" fill="none" stroke="#6e9fff" stroke-width="1.1"/><path d="M4.8 3v3.6M3 4.8h3.6M7.6 7.6l2.6 2.6" stroke="#6e9fff" stroke-width="1.1" stroke-linecap="round"/></svg>
<div class="a" style="left:1097.10px;top:663.60px;width:277.60px;height:1px;background:rgba(204,204,220,0.075)"></div>
<div class="t" style="right:317.80px;top:658.81px;font-size:9.6px;line-height:9.6px;color:#c4c5cf;font-weight:normal;-webkit-text-stroke:0.2px #c4c5cf;">3</div>
<div class="a" style="left:1100.50px;top:653.30px;width:1px;height:89.20px;background:rgba(204,204,220,0.075)"></div>
<div class="a" style="left:1147.20px;top:653.30px;width:1px;height:89.20px;background:rgba(204,204,220,0.075)"></div>
<div class="a" style="left:1193.90px;top:653.30px;width:1px;height:89.20px;background:rgba(204,204,220,0.075)"></div>
<div class="a" style="left:1240.60px;top:653.30px;width:1px;height:89.20px;background:rgba(204,204,220,0.075)"></div>
<div class="a" style="left:1287.30px;top:653.30px;width:1px;height:89.20px;background:rgba(204,204,220,0.075)"></div>
<div class="a" style="left:1334.00px;top:653.30px;width:1px;height:89.20px;background:rgba(204,204,220,0.075)"></div>
<svg class="a" style="left:0;top:0" width="1410" height="672"><rect x="58.00" y="549.82" width="2.6" height="39.58" fill="#73bf69"/><rect x="62.34" y="546.79" width="2.6" height="42.61" fill="#73bf69"/><rect x="66.67" y="550.71" width="2.6" height="38.69" fill="#73bf69"/><rect x="71.00" y="547.50" width="2.6" height="41.90" fill="#73bf69"/><rect x="75.34" y="547.50" width="2.6" height="41.90" fill="#73bf69"/><rect x="79.67" y="547.50" width="2.6" height="41.90" fill="#73bf69"/><rect x="84.01" y="547.50" width="2.6" height="41.90" fill="#73bf69"/><rect x="88.34" y="550.36" width="2.6" height="39.04" fill="#73bf69"/><rect x="92.68" y="547.14" width="2.6" height="42.26" fill="#73bf69"/><rect x="97.02" y="548.39" width="2.6" height="41.01" fill="#73bf69"/><rect x="101.35" y="549.46" width="2.6" height="39.94" fill="#73bf69"/><rect x="105.69" y="548.57" width="2.6" height="40.83" fill="#73bf69"/><rect x="110.02" y="546.79" width="2.6" height="42.61" fill="#73bf69"/><rect x="114.35" y="546.43" width="2.6" height="42.97" fill="#73bf69"/><rect x="118.69" y="543.04" width="2.6" height="46.36" fill="#73bf69"/><rect x="123.03" y="550.71" width="2.6" height="38.69" fill="#73bf69"/><rect x="127.36" y="547.14" width="2.6" height="42.26" fill="#73bf69"/><rect x="131.69" y="550.71" width="2.6" height="38.69" fill="#73bf69"/><rect x="136.03" y="546.79" width="2.6" height="42.61" fill="#73bf69"/><rect x="140.37" y="548.93" width="2.6" height="40.47" fill="#73bf69"/><rect x="144.70" y="547.50" width="2.6" height="41.90" fill="#73bf69"/><rect x="149.03" y="545.00" width="2.6" height="44.40" fill="#73bf69"/><rect x="153.37" y="548.39" width="2.6" height="41.01" fill="#73bf69"/><rect x="157.70" y="547.50" width="2.6" height="41.90" fill="#73bf69"/><rect x="162.04" y="547.50" width="2.6" height="41.90" fill="#73bf69"/><rect x="166.38" y="549.82" width="2.6" height="39.58" fill="#73bf69"/><rect x="170.71" y="549.46" width="2.6" height="39.94" fill="#73bf69"/><rect x="175.05" y="548.93" width="2.6" height="40.47" fill="#73bf69"/><rect x="179.38" y="546.79" width="2.6" height="42.61" fill="#73bf69"/><rect x="183.72" y="546.25" width="2.6" height="43.15" fill="#73bf69"/><rect x="188.05" y="550.71" width="2.6" height="38.69" fill="#73bf69"/><rect x="192.38" y="546.79" width="2.6" height="42.61" fill="#73bf69"/><rect x="196.72" y="550.71" width="2.6" height="38.69" fill="#73bf69"/><rect x="201.06" y="546.79" width="2.6" height="42.61" fill="#73bf69"/><rect x="205.39" y="548.21" width="2.6" height="41.19" fill="#73bf69"/><rect x="209.72" y="548.21" width="2.6" height="41.19" fill="#73bf69"/><rect x="214.06" y="547.50" width="2.6" height="41.90" fill="#73bf69"/><rect x="218.40" y="550.00" width="2.6" height="39.40" fill="#73bf69"/><rect x="222.73" y="546.43" width="2.6" height="42.97" fill="#73bf69"/><rect x="227.06" y="547.50" width="2.6" height="41.90" fill="#73bf69"/><rect x="231.40" y="550.00" width="2.6" height="39.40" fill="#73bf69"/><rect x="235.73" y="548.04" width="2.6" height="41.36" fill="#73bf69"/><rect x="240.07" y="520.71" width="2.6" height="68.69" fill="#73bf69"/><rect x="244.41" y="505.18" width="2.6" height="84.22" fill="#73bf69"/><rect x="248.74" y="500.71" width="2.6" height="88.69" fill="#73bf69"/><rect x="253.07" y="509.11" width="2.6" height="80.29" fill="#73bf69"/><rect x="257.41" y="505.18" width="2.6" height="84.22" fill="#73bf69"/><rect x="261.75" y="511.79" width="2.6" height="77.61" fill="#73bf69"/><rect x="266.08" y="506.07" width="2.6" height="83.33" fill="#73bf69"/><rect x="270.41" y="510.00" width="2.6" height="79.40" fill="#73bf69"/><rect x="274.75" y="505.18" width="2.6" height="84.22" fill="#73bf69"/><rect x="279.09" y="504.29" width="2.6" height="85.11" fill="#73bf69"/><rect x="283.42" y="511.07" width="2.6" height="78.33" fill="#73bf69"/><rect x="287.75" y="505.18" width="2.6" height="84.22" fill="#73bf69"/><rect x="292.09" y="542.68" width="2.6" height="46.72" fill="#73bf69"/><rect x="309.43" y="547.14" width="2.6" height="42.26" fill="#73bf69"/><rect x="313.76" y="547.14" width="2.6" height="42.26" fill="#73bf69"/><rect x="318.10" y="550.00" width="2.6" height="39.40" fill="#73bf69"/><rect x="322.44" y="546.79" width="2.6" height="42.61" fill="#73bf69"/><rect x="326.77" y="550.71" width="2.6" height="38.69" fill="#73bf69"/><rect x="331.11" y="580.71" width="2.6" height="8.69" fill="#73bf69"/><rect x="404.00" y="549.82" width="2.6" height="39.58" fill="#73bf69"/><rect x="408.33" y="547.14" width="2.6" height="42.26" fill="#73bf69"/><rect x="412.67" y="549.82" width="2.6" height="39.58" fill="#73bf69"/><rect x="417.00" y="540.00" width="2.6" height="49.40" fill="#73bf69"/><rect x="421.34" y="548.93" width="2.6" height="40.47" fill="#73bf69"/><rect x="425.68" y="547.50" width="2.6" height="41.90" fill="#73bf69"/><rect x="430.01" y="548.93" width="2.6" height="40.47" fill="#73bf69"/><rect x="434.35" y="549.82" width="2.6" height="39.58" fill="#73bf69"/><rect x="438.68" y="546.43" width="2.6" height="42.97" fill="#73bf69"/><rect x="443.01" y="548.93" width="2.6" height="40.47" fill="#73bf69"/><rect x="447.35" y="548.04" width="2.6" height="41.36" fill="#73bf69"/><rect x="451.69" y="548.93" width="2.6" height="40.47" fill="#73bf69"/><rect x="456.02" y="547.50" width="2.6" height="41.90" fill="#73bf69"/><rect x="460.36" y="546.79" width="2.6" height="42.61" fill="#73bf69"/><rect x="464.69" y="548.04" width="2.6" height="41.36" fill="#73bf69"/><rect x="469.02" y="549.82" width="2.6" height="39.58" fill="#73bf69"/><rect x="473.36" y="548.57" width="2.6" height="40.83" fill="#73bf69"/><rect x="477.69" y="549.82" width="2.6" height="39.58" fill="#73bf69"/><rect x="482.03" y="546.43" width="2.6" height="42.97" fill="#73bf69"/><rect x="486.37" y="548.04" width="2.6" height="41.36" fill="#73bf69"/><rect x="490.70" y="547.50" width="2.6" height="41.90" fill="#73bf69"/><rect x="495.03" y="548.93" width="2.6" height="40.47" fill="#73bf69"/><rect x="499.37" y="550.00" width="2.6" height="39.40" fill="#73bf69"/><rect x="503.70" y="546.43" width="2.6" height="42.97" fill="#73bf69"/><rect x="508.04" y="549.82" width="2.6" height="39.58" fill="#73bf69"/><rect x="512.38" y="547.50" width="2.6" height="41.90" fill="#73bf69"/><rect x="516.71" y="548.93" width="2.6" height="40.47" fill="#73bf69"/><rect x="521.05" y="547.50" width="2.6" height="41.90" fill="#73bf69"/><rect x="525.38" y="546.79" width="2.6" height="42.61" fill="#73bf69"/><rect x="529.72" y="548.04" width="2.6" height="41.36" fill="#73bf69"/><rect x="534.05" y="549.82" width="2.6" height="39.58" fill="#73bf69"/><rect x="538.38" y="548.57" width="2.6" height="40.83" fill="#73bf69"/><rect x="542.72" y="549.82" width="2.6" height="39.58" fill="#73bf69"/><rect x="547.06" y="546.43" width="2.6" height="42.97" fill="#73bf69"/><rect x="551.39" y="548.04" width="2.6" height="41.36" fill="#73bf69"/><rect x="555.73" y="548.57" width="2.6" height="40.83" fill="#73bf69"/><rect x="560.06" y="548.04" width="2.6" height="41.36" fill="#73bf69"/><rect x="564.39" y="550.00" width="2.6" height="39.40" fill="#73bf69"/><rect x="568.73" y="543.57" width="2.6" height="45.83" fill="#73bf69"/><rect x="573.07" y="547.14" width="2.6" height="42.26" fill="#73bf69"/><rect x="577.40" y="547.50" width="2.6" height="41.90" fill="#73bf69"/><rect x="581.74" y="548.93" width="2.6" height="40.47" fill="#73bf69"/><rect x="586.07" y="517.68" width="2.6" height="71.72" fill="#73bf69"/><rect x="590.40" y="503.93" width="2.6" height="85.47" fill="#73bf69"/><rect x="594.74" y="506.96" width="2.6" height="82.44" fill="#73bf69"/><rect x="599.08" y="508.75" width="2.6" height="80.65" fill="#73bf69"/><rect x="603.41" y="506.07" width="2.6" height="83.33" fill="#73bf69"/><rect x="607.75" y="510.00" width="2.6" height="79.40" fill="#73bf69"/><rect x="612.08" y="502.86" width="2.6" height="86.54" fill="#73bf69"/><rect x="616.41" y="506.96" width="2.6" height="82.44" fill="#73bf69"/><rect x="620.75" y="507.86" width="2.6" height="81.54" fill="#73bf69"/><rect x="625.09" y="506.96" width="2.6" height="82.44" fill="#73bf69"/><rect x="629.42" y="511.07" width="2.6" height="78.33" fill="#73bf69"/><rect x="633.75" y="502.86" width="2.6" height="86.54" fill="#73bf69"/><rect x="638.09" y="542.68" width="2.6" height="46.72" fill="#73bf69"/><rect x="655.43" y="546.79" width="2.6" height="42.61" fill="#73bf69"/><rect x="659.76" y="548.04" width="2.6" height="41.36" fill="#73bf69"/><rect x="664.10" y="550.71" width="2.6" height="38.69" fill="#73bf69"/><rect x="668.43" y="546.25" width="2.6" height="43.15" fill="#73bf69"/><rect x="672.77" y="547.14" width="2.6" height="42.26" fill="#73bf69"/><rect x="677.11" y="580.71" width="2.6" height="8.69" fill="#73bf69"/><rect x="750.00" y="582.87" width="2.6" height="6.53" fill="#73bf69"/><rect x="754.34" y="582.87" width="2.6" height="6.53" fill="#73bf69"/><rect x="758.67" y="583.39" width="2.6" height="6.01" fill="#73bf69"/><rect x="763.00" y="581.30" width="2.6" height="8.10" fill="#73bf69"/><rect x="767.34" y="582.61" width="2.6" height="6.79" fill="#73bf69"/><rect x="771.67" y="583.39" width="2.6" height="6.01" fill="#73bf69"/><rect x="776.01" y="582.61" width="2.6" height="6.79" fill="#73bf69"/><rect x="780.35" y="582.61" width="2.6" height="6.79" fill="#73bf69"/><rect x="784.68" y="581.30" width="2.6" height="8.10" fill="#73bf69"/><rect x="789.01" y="583.39" width="2.6" height="6.01" fill="#73bf69"/><rect x="793.35" y="582.61" width="2.6" height="6.79" fill="#73bf69"/><rect x="797.68" y="582.61" width="2.6" height="6.79" fill="#73bf69"/><rect x="802.02" y="582.61" width="2.6" height="6.79" fill="#73bf69"/><rect x="806.36" y="582.61" width="2.6" height="6.79" fill="#73bf69"/><rect x="810.69" y="581.82" width="2.6" height="7.58" fill="#73bf69"/><rect x="815.02" y="582.61" width="2.6" height="6.79" fill="#73bf69"/><rect x="819.36" y="582.87" width="2.6" height="6.53" fill="#73bf69"/><rect x="823.69" y="583.39" width="2.6" height="6.01" fill="#73bf69"/><rect x="828.03" y="582.08" width="2.6" height="7.32" fill="#73bf69"/><rect x="832.37" y="581.82" width="2.6" height="7.58" fill="#73bf69"/><rect x="836.70" y="583.39" width="2.6" height="6.01" fill="#73bf69"/><rect x="841.03" y="582.61" width="2.6" height="6.79" fill="#73bf69"/><rect x="845.37" y="582.61" width="2.6" height="6.79" fill="#73bf69"/><rect x="849.70" y="582.34" width="2.6" height="7.06" fill="#73bf69"/><rect x="854.04" y="582.61" width="2.6" height="6.79" fill="#73bf69"/><rect x="858.38" y="582.34" width="2.6" height="7.06" fill="#73bf69"/><rect x="862.71" y="582.61" width="2.6" height="6.79" fill="#73bf69"/><rect x="867.05" y="583.39" width="2.6" height="6.01" fill="#73bf69"/><rect x="871.38" y="582.61" width="2.6" height="6.79" fill="#73bf69"/><rect x="875.72" y="582.61" width="2.6" height="6.79" fill="#73bf69"/><rect x="880.05" y="581.56" width="2.6" height="7.84" fill="#73bf69"/><rect x="884.38" y="583.39" width="2.6" height="6.01" fill="#73bf69"/><rect x="888.72" y="582.61" width="2.6" height="6.79" fill="#73bf69"/><rect x="893.06" y="582.34" width="2.6" height="7.06" fill="#73bf69"/><rect x="897.39" y="582.87" width="2.6" height="6.53" fill="#73bf69"/><rect x="901.73" y="582.34" width="2.6" height="7.06" fill="#73bf69"/><rect x="906.06" y="582.87" width="2.6" height="6.53" fill="#73bf69"/><rect x="910.39" y="582.61" width="2.6" height="6.79" fill="#73bf69"/><rect x="914.73" y="582.34" width="2.6" height="7.06" fill="#73bf69"/><rect x="919.07" y="582.87" width="2.6" height="6.53" fill="#73bf69"/><rect x="923.40" y="582.61" width="2.6" height="6.79" fill="#73bf69"/><rect x="927.74" y="582.34" width="2.6" height="7.06" fill="#73bf69"/><rect x="932.07" y="577.38" width="2.6" height="12.02" fill="#73bf69"/><rect x="936.40" y="575.81" width="2.6" height="13.59" fill="#73bf69"/><rect x="940.74" y="575.81" width="2.6" height="13.59" fill="#73bf69"/><rect x="945.08" y="575.81" width="2.6" height="13.59" fill="#73bf69"/><rect x="949.41" y="574.77" width="2.6" height="14.63" fill="#73bf69"/><rect x="953.75" y="575.81" width="2.6" height="13.59" fill="#73bf69"/><rect x="958.08" y="574.77" width="2.6" height="14.63" fill="#73bf69"/><rect x="962.41" y="575.81" width="2.6" height="13.59" fill="#73bf69"/><rect x="966.75" y="576.33" width="2.6" height="13.07" fill="#73bf69"/><rect x="971.09" y="573.72" width="2.6" height="15.68" fill="#73bf69"/><rect x="975.42" y="575.81" width="2.6" height="13.59" fill="#73bf69"/><rect x="979.75" y="574.51" width="2.6" height="14.89" fill="#73bf69"/><rect x="984.09" y="582.34" width="2.6" height="7.06" fill="#73bf69"/><rect x="1001.43" y="582.87" width="2.6" height="6.53" fill="#73bf69"/><rect x="1005.76" y="582.87" width="2.6" height="6.53" fill="#73bf69"/><rect x="1010.10" y="582.87" width="2.6" height="6.53" fill="#73bf69"/><rect x="1014.43" y="583.39" width="2.6" height="6.01" fill="#73bf69"/><rect x="1018.77" y="582.08" width="2.6" height="7.32" fill="#73bf69"/><rect x="1023.11" y="588.62" width="2.6" height="0.78" fill="#73bf69"/><rect x="1095.30" y="582.55" width="2.6" height="6.85" fill="#73bf69"/><rect x="1099.63" y="582.55" width="2.6" height="6.85" fill="#73bf69"/><rect x="1103.97" y="582.55" width="2.6" height="6.85" fill="#73bf69"/><rect x="1108.30" y="582.55" width="2.6" height="6.85" fill="#73bf69"/><rect x="1112.64" y="583.09" width="2.6" height="6.31" fill="#73bf69"/><rect x="1116.97" y="582.55" width="2.6" height="6.85" fill="#73bf69"/><rect x="1121.31" y="583.09" width="2.6" height="6.31" fill="#73bf69"/><rect x="1125.64" y="582.55" width="2.6" height="6.85" fill="#73bf69"/><rect x="1129.98" y="581.49" width="2.6" height="7.91" fill="#73bf69"/><rect x="1134.32" y="582.55" width="2.6" height="6.85" fill="#73bf69"/><rect x="1138.65" y="582.34" width="2.6" height="7.06" fill="#73bf69"/><rect x="1142.98" y="582.55" width="2.6" height="6.85" fill="#73bf69"/><rect x="1147.32" y="582.55" width="2.6" height="6.85" fill="#73bf69"/><rect x="1151.65" y="582.55" width="2.6" height="6.85" fill="#73bf69"/><rect x="1155.99" y="582.55" width="2.6" height="6.85" fill="#73bf69"/><rect x="1160.33" y="582.55" width="2.6" height="6.85" fill="#73bf69"/><rect x="1164.66" y="582.02" width="2.6" height="7.38" fill="#73bf69"/><rect x="1168.99" y="582.34" width="2.6" height="7.06" fill="#73bf69"/><rect x="1173.33" y="581.49" width="2.6" height="7.91" fill="#73bf69"/><rect x="1177.66" y="582.55" width="2.6" height="6.85" fill="#73bf69"/><rect x="1182.00" y="583.09" width="2.6" height="6.31" fill="#73bf69"/><rect x="1186.34" y="582.55" width="2.6" height="6.85" fill="#73bf69"/><rect x="1190.67" y="582.55" width="2.6" height="6.85" fill="#73bf69"/><rect x="1195.00" y="582.02" width="2.6" height="7.38" fill="#73bf69"/><rect x="1199.34" y="582.02" width="2.6" height="7.38" fill="#73bf69"/><rect x="1203.67" y="582.55" width="2.6" height="6.85" fill="#73bf69"/><rect x="1208.01" y="582.02" width="2.6" height="7.38" fill="#73bf69"/><rect x="1212.35" y="582.55" width="2.6" height="6.85" fill="#73bf69"/><rect x="1216.68" y="583.09" width="2.6" height="6.31" fill="#73bf69"/><rect x="1221.01" y="582.02" width="2.6" height="7.38" fill="#73bf69"/><rect x="1225.35" y="582.55" width="2.6" height="6.85" fill="#73bf69"/><rect x="1229.68" y="582.55" width="2.6" height="6.85" fill="#73bf69"/><rect x="1234.02" y="582.02" width="2.6" height="7.38" fill="#73bf69"/><rect x="1238.36" y="582.02" width="2.6" height="7.38" fill="#73bf69"/><rect x="1242.69" y="582.02" width="2.6" height="7.38" fill="#73bf69"/><rect x="1247.02" y="583.09" width="2.6" height="6.31" fill="#73bf69"/><rect x="1251.36" y="582.87" width="2.6" height="6.53" fill="#73bf69"/><rect x="1255.69" y="582.02" width="2.6" height="7.38" fill="#73bf69"/><rect x="1260.03" y="582.02" width="2.6" height="7.38" fill="#73bf69"/><rect x="1264.37" y="582.55" width="2.6" height="6.85" fill="#73bf69"/><rect x="1268.70" y="582.02" width="2.6" height="7.38" fill="#73bf69"/><rect x="1273.03" y="582.87" width="2.6" height="6.53" fill="#73bf69"/><rect x="1277.37" y="576.17" width="2.6" height="13.23" fill="#73bf69"/><rect x="1281.70" y="576.17" width="2.6" height="13.23" fill="#73bf69"/><rect x="1286.04" y="575.64" width="2.6" height="13.76" fill="#73bf69"/><rect x="1290.38" y="574.57" width="2.6" height="14.83" fill="#73bf69"/><rect x="1294.71" y="575.64" width="2.6" height="13.76" fill="#73bf69"/><rect x="1299.05" y="575.64" width="2.6" height="13.76" fill="#73bf69"/><rect x="1303.38" y="573.83" width="2.6" height="15.57" fill="#73bf69"/><rect x="1307.71" y="575.64" width="2.6" height="13.76" fill="#73bf69"/><rect x="1312.05" y="576.17" width="2.6" height="13.23" fill="#73bf69"/><rect x="1316.38" y="575.64" width="2.6" height="13.76" fill="#73bf69"/><rect x="1320.72" y="575.64" width="2.6" height="13.76" fill="#73bf69"/><rect x="1325.05" y="573.51" width="2.6" height="15.89" fill="#73bf69"/><rect x="1329.39" y="582.02" width="2.6" height="7.38" fill="#73bf69"/><rect x="1346.73" y="582.55" width="2.6" height="6.85" fill="#73bf69"/><rect x="1351.07" y="581.81" width="2.6" height="7.59" fill="#73bf69"/><rect x="1355.40" y="582.55" width="2.6" height="6.85" fill="#73bf69"/><rect x="1359.73" y="582.02" width="2.6" height="7.38" fill="#73bf69"/><rect x="1364.07" y="582.55" width="2.6" height="6.85" fill="#73bf69"/><rect x="1368.40" y="588.40" width="2.6" height="1.00" fill="#73bf69"/></svg>
<div class="a" style="left:0px;top:668.5px;width:1400px;height:1.2px;background:#2e3035;"></div>
<div class="a" style="left:0px;top:669.7px;width:1400px;height:3px;background:#111217;"></div>
<div class="a" style="left:1399.5px;top:28px;width:10.5px;height:644px;background:#4a4b4d;"></div>
<div class="a" style="left:1399.5px;top:28px;width:10.5px;height:12.6px;background:#4b4c50;"></div>
<svg class="a" style="left:1402.5px;top:32.5px" width="6" height="4"><path d="M0 4L3 0.5L6 4Z" fill="#d8d8d8"/></svg>
<div class="a" style="left:1400.5px;top:40.6px;width:9.5px;height:374.5px;background:#6c6e6c;"></div>
<svg class="a" style="left:1402.5px;top:660.5px" width="6" height="4"><path d="M0 0L3 3.5L6 0Z" fill="#e0e0e0"/></svg>
</body></html>
